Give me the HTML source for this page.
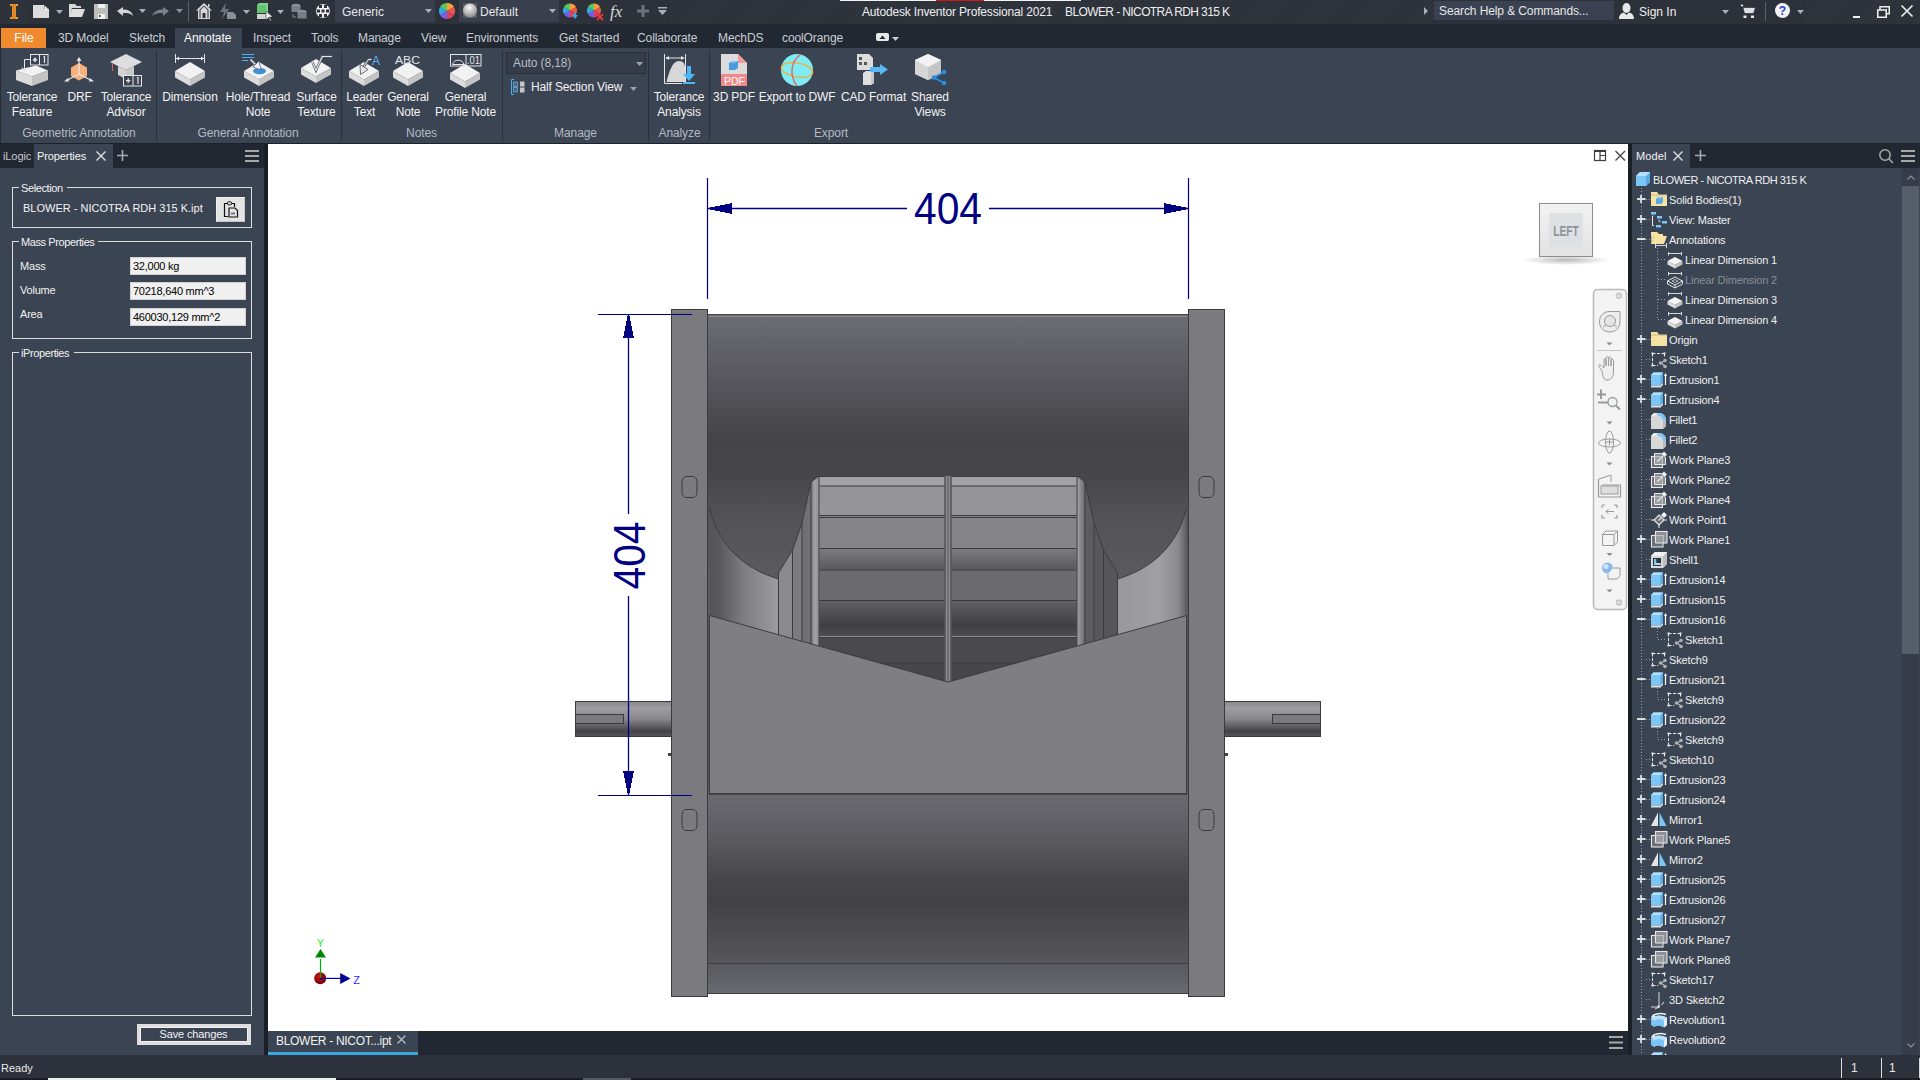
<!DOCTYPE html><html><head><meta charset="utf-8"><title>Autodesk Inventor Professional 2021</title>
<style>
html,body{margin:0;padding:0}
body{width:1920px;height:1080px;position:relative;overflow:hidden;background:#3b4453;font-family:'Liberation Sans', sans-serif}
div,span{box-sizing:border-box}
svg{position:absolute;overflow:visible}
</style></head><body>

<div style="position:absolute;left:0px;top:0px;width:1920px;height:24px;background:#2c313a;"></div>
<div style="position:absolute;left:0px;top:0px;width:28px;height:24px;background:transparent;background-image:repeating-linear-gradient(135deg,rgba(255,255,255,0.03) 0px,rgba(255,255,255,0.03) 1px,transparent 1px,transparent 3.6px);background-attachment:fixed"></div>
<div style="position:absolute;left:670px;top:0px;width:764px;height:24px;background:transparent;background-image:repeating-linear-gradient(135deg,rgba(255,255,255,0.03) 0px,rgba(255,255,255,0.03) 1px,transparent 1px,transparent 3.6px);background-attachment:fixed"></div>
<div style="position:absolute;left:1805px;top:0px;width:115px;height:24px;background:transparent;background-image:repeating-linear-gradient(135deg,rgba(255,255,255,0.03) 0px,rgba(255,255,255,0.03) 1px,transparent 1px,transparent 3.6px);background-attachment:fixed"></div>
<div style="position:absolute;left:840px;top:0px;width:241px;height:1px;background:#f4f4f4;"></div>
<div style="position:absolute;left:936px;top:0px;width:48px;height:1px;background:#d01818;"></div>
<div style="position:absolute;left:0px;top:24px;width:1920px;height:24px;background:#222832;"></div>
<div style="position:absolute;left:0px;top:48px;width:1920px;height:95px;background:#3b4453;"></div>
<div style="position:absolute;left:0px;top:48px;width:1px;height:95px;background:#262b33;"></div>
<div style="position:absolute;left:0px;top:143px;width:1920px;height:1px;background:#1d2128;"></div>
<div style="position:absolute;left:0px;top:144px;width:264px;height:24px;background:#222832;"></div>
<div style="position:absolute;left:0px;top:168px;width:264px;height:887px;background:#3b4453;"></div>
<div style="position:absolute;left:264px;top:144px;width:4px;height:911px;background:#1b1f26;"></div>
<div style="position:absolute;left:1628px;top:144px;width:4px;height:911px;background:#1b1f26;"></div>
<div style="position:absolute;left:268px;top:144px;width:1360px;height:887px;background:#ffffff;"></div>
<div style="position:absolute;left:1632px;top:144px;width:288px;height:24px;background:#222832;"></div>
<div style="position:absolute;left:1632px;top:168px;width:288px;height:887px;background:#3b4453;"></div>
<div style="position:absolute;left:268px;top:1031px;width:1360px;height:24px;background:#222832;"></div>
<div style="position:absolute;left:0px;top:1055px;width:1920px;height:23px;background:#2c313b;"></div>
<div style="position:absolute;left:0px;top:1078px;width:1920px;height:2px;background:#1a1d22;"></div>
<div style="position:absolute;left:48px;top:1078px;width:288px;height:2px;background:#f0f0f0;"></div>
<div style="position:absolute;left:583px;top:1078px;width:48px;height:2px;background:#555a60;"></div>
<svg style="left:10px;top:4px;" width="10" height="15" viewBox="0 0 10 15"><defs><linearGradient id="lg" x1="0" x2="1"><stop offset="0" stop-color="#f7a33a"/><stop offset="0.5" stop-color="#d9801f"/><stop offset="1" stop-color="#f0a540"/></linearGradient></defs><path d="M0 0H8V2H6V13H8V15H0V13H2V2H0Z" fill="url(#lg)"/></svg>
<svg style="left:33px;top:5px;" width="16" height="13" viewBox="0 0 16 13"><path d="M0 0H11L16 4V13H0Z" fill="#dcdcdc"/><path d="M11 0V4H16" fill="#3a4150"/><path d="M11.5 0.5L15.5 4.5H11.5Z" fill="#f4f4f4"/></svg>
<svg style="left:56px;top:10px;" width="7" height="4" viewBox="0 0 7 4"><path d="M0 0H7L3.5 4Z" fill="#a9b0bd"/></svg>
<svg style="left:69px;top:4px;" width="16" height="14" viewBox="0 0 16 14"><path d="M0 0H6L8 2H12V4H3L1 13H0Z" fill="#d8d8d8"/><path d="M3 5H16L13 13H0Z" fill="#dedede"/></svg>
<svg style="left:94px;top:4px;" width="14" height="15" viewBox="0 0 14 15"><rect x="0" y="0" width="14" height="15" fill="#bdbdbd"/><rect x="4" y="0" width="7" height="4" fill="#f2f2f2"/><rect x="4" y="10" width="7" height="5" fill="#f2f2f2"/><rect x="5" y="11" width="1.5" height="2" fill="#333"/></svg>
<svg style="left:117px;top:7px;" width="16" height="10" viewBox="0 0 16 10"><path d="M0 4L6 0V2.5C11 2.5 15 4 16 9C14 6.5 11 6 6 6V9Z" fill="#d4d4d4"/></svg>
<svg style="left:139px;top:9px;" width="7" height="4" viewBox="0 0 7 4"><path d="M0 0H7L3.5 4Z" fill="#a9b0bd"/></svg>
<svg style="left:152px;top:7px;" width="17" height="10" viewBox="0 0 17 10"><path d="M17 4L11 0V2.5C6 2.5 2 4 0 9C3 6.5 6 6 11 6V9Z" fill="#7d818a"/></svg>
<svg style="left:176px;top:9px;" width="7" height="4" viewBox="0 0 7 4"><path d="M0 0H7L3.5 4Z" fill="#8a909b"/></svg>
<div style="position:absolute;left:188px;top:1px;width:1px;height:21px;background:#5b616c;"></div>
<svg style="left:196px;top:3px;" width="16" height="16" viewBox="0 0 16 16"><path d="M8 0L16 7.5H14V16H2V7.5H0Z" fill="#d6d6d6"/><path d="M8 2.5L3.5 6.8V15H12.5V6.8Z" fill="#2c313a"/><path d="M8 3.5L4.5 7V15H11.5V7Z" fill="#d6d6d6"/><rect x="6.5" y="10" width="3" height="5" fill="#2c313a"/><rect x="12" y="1" width="1.5" height="3" fill="#d6d6d6"/></svg>
<svg style="left:220px;top:3px;" width="16" height="16" viewBox="0 0 16 16"><path d="M6 0L0 9H4L2 16L9 6H5Z" fill="#6e737c"/><path d="M7 9H13L16 12V16H7Z" fill="#8b8f97"/></svg>
<svg style="left:243px;top:10px;" width="7" height="4" viewBox="0 0 7 4"><path d="M0 0H7L3.5 4Z" fill="#a9b0bd"/></svg>
<svg style="left:256px;top:3px;" width="17" height="17" viewBox="0 0 17 17"><path d="M3 0H12V10H1V2Z" fill="#7ed28c"/><path d="M1 2H10V10H1Z" fill="#63c473"/><rect x="1" y="11" width="11" height="5" fill="#d4d4d4"/><path d="M10 8L10 17L12.5 14.5L14.5 18L15.5 17.5L13.5 14H17Z" fill="#f0f0f0" stroke="#222" stroke-width="0.5"/></svg>
<svg style="left:277px;top:10px;" width="7" height="4" viewBox="0 0 7 4"><path d="M0 0H7L3.5 4Z" fill="#a9b0bd"/></svg>
<svg style="left:291px;top:3px;" width="16" height="16" viewBox="0 0 16 16"><ellipse cx="5" cy="3" rx="4.5" ry="2.2" fill="#8c9098"/><rect x="0.5" y="3" width="9" height="6" fill="#7a7e86"/><ellipse cx="11" cy="9" rx="4.5" ry="2.2" fill="#8c9098"/><rect x="6.5" y="9" width="9" height="6.5" fill="#7a7e86"/><path d="M2 11V14H5" stroke="#8c9098" fill="none" stroke-width="1"/></svg>
<svg style="left:315px;top:3px;" width="16" height="16" viewBox="0 0 16 16"><circle cx="8" cy="8" r="7.3" fill="#f2f2f2"/><g fill="#2c313a"><rect x="4" y="2" width="3" height="3"/><rect x="9" y="2" width="3" height="3"/><rect x="2" y="6.5" width="3" height="3"/><rect x="6.5" y="6.5" width="3" height="3"/><rect x="11" y="6.5" width="3" height="3"/><rect x="4" y="11" width="3" height="3"/><rect x="9" y="11" width="3" height="3"/></g><circle cx="8" cy="8" r="7.3" fill="none" stroke="#2c313a" stroke-width="0.8"/></svg>
<div style="position:absolute;left:335px;top:0px;width:100px;height:22px;background:#393f4c;"></div>
<div style="position:absolute;left:342px;top:5px;font-size:12px;line-height:14px;color:#e8e8e8;white-space:nowrap;">Generic</div>
<svg style="left:425px;top:9px;" width="7" height="4" viewBox="0 0 7 4"><path d="M0 0H7L3.5 4Z" fill="#a9b0bd"/></svg>
<svg style="left:439px;top:3px;" width="16" height="16" viewBox="0 0 16 16"><g transform="translate(8,8)"><path d="M0 0L0 -8A8 8 0 0 1 6.93 -4Z" fill="#f7a23a"/><path d="M0 0L6.93 -4A8 8 0 0 1 6.93 4Z" fill="#e9574a"/><path d="M0 0L6.93 4A8 8 0 0 1 0 8Z" fill="#d9415c"/><path d="M0 0L0 8A8 8 0 0 1 -6.93 4Z" fill="#7b5ce6"/><path d="M0 0L-6.93 4A8 8 0 0 1 -6.93 -4Z" fill="#32a8e8"/><path d="M0 0L-6.93 -4A8 8 0 0 1 0 -8Z" fill="#5fc25a"/></g></svg>
<div style="position:absolute;left:459px;top:0px;width:100px;height:22px;background:#393f4c;"></div>
<svg style="left:463px;top:3px;" width="14" height="15" viewBox="0 0 14 15"><defs><radialGradient id="mat" cx="0.45" cy="0.3" r="0.7"><stop offset="0" stop-color="#f8f8f8"/><stop offset="1" stop-color="#8a8a8a"/></radialGradient></defs><rect x="0" y="0" width="14" height="15" fill="#5a5a5a"/><circle cx="7" cy="7.5" r="7" fill="url(#mat)"/></svg>
<div style="position:absolute;left:480px;top:5px;font-size:12px;line-height:14px;color:#e8e8e8;white-space:nowrap;">Default</div>
<svg style="left:549px;top:9px;" width="7" height="4" viewBox="0 0 7 4"><path d="M0 0H7L3.5 4Z" fill="#a9b0bd"/></svg>
<svg style="left:563px;top:3px;" width="17" height="17" viewBox="0 0 17 17"><g transform="translate(7,7.5)"><path d="M0 0L0 -7A7 7 0 0 1 6.062 -3.5Z" fill="#f7a23a"/><path d="M0 0L6.062 -3.5A7 7 0 0 1 6.062 3.5Z" fill="#e9574a"/><path d="M0 0L6.062 3.5A7 7 0 0 1 0 7Z" fill="#d9415c"/><path d="M0 0L0 7A7 7 0 0 1 -6.062 3.5Z" fill="#7b5ce6"/><path d="M0 0L-6.062 3.5A7 7 0 0 1 -6.062 -3.5Z" fill="#32a8e8"/><path d="M0 0L-6.062 -3.5A7 7 0 0 1 0 -7Z" fill="#5fc25a"/></g><path d="M9 12H15L12 16Z" fill="#39a7e6"/><rect x="11" y="10" width="2" height="3" fill="#39a7e6"/></svg>
<svg style="left:587px;top:3px;" width="17" height="17" viewBox="0 0 17 17"><g transform="translate(7,7.5)"><path d="M0 0L0 -7A7 7 0 0 1 6.062 -3.5Z" fill="#f7a23a"/><path d="M0 0L6.062 -3.5A7 7 0 0 1 6.062 3.5Z" fill="#e9574a"/><path d="M0 0L6.062 3.5A7 7 0 0 1 0 7Z" fill="#d9415c"/><path d="M0 0L0 7A7 7 0 0 1 -6.062 3.5Z" fill="#7b5ce6"/><path d="M0 0L-6.062 3.5A7 7 0 0 1 -6.062 -3.5Z" fill="#32a8e8"/><path d="M0 0L-6.062 -3.5A7 7 0 0 1 0 -7Z" fill="#5fc25a"/></g><path d="M10 11L16 17M16 11L10 17" stroke="#e8383d" stroke-width="1.8"/></svg>
<div style="position:absolute;left:610px;top:2px;font-size:17px;line-height:20px;color:#d8d8d8;white-space:nowrap;font-family:'Liberation Serif',serif"><i>fx</i></div>
<svg style="left:637px;top:5px;" width="12" height="12" viewBox="0 0 12 12"><path d="M4.5 0H7.5V4.5H12V7.5H7.5V12H4.5V7.5H0V4.5H4.5Z" fill="#6c717a"/></svg>
<svg style="left:658px;top:7px;" width="9" height="8" viewBox="0 0 9 8"><rect x="0" y="0" width="9" height="1.5" fill="#a9b0bd"/><path d="M0 3H9L4.5 8Z" fill="#a9b0bd"/></svg>
<div style="position:absolute;left:862px;top:5px;font-size:12px;line-height:14px;color:#eeeeee;white-space:nowrap;letter-spacing:-0.17px">Autodesk Inventor Professional 2021</div>
<div style="position:absolute;left:1065px;top:5px;font-size:12px;line-height:14px;color:#eeeeee;white-space:nowrap;letter-spacing:-0.6px">BLOWER - NICOTRA RDH 315 K</div>
<svg style="left:1424px;top:7px;" width="4" height="8" viewBox="0 0 4 8"><path d="M0 0L4 4L0 8Z" fill="#a9b0bd"/></svg>
<div style="position:absolute;left:1434px;top:1px;width:180px;height:19px;background:#3a4150;"></div>
<div style="position:absolute;left:1439px;top:4px;font-size:12px;line-height:14px;color:#e6e6e6;white-space:nowrap;letter-spacing:-0.1px">Search Help &amp; Commands...</div>
<svg style="left:1619px;top:3px;" width="15" height="16" viewBox="0 0 15 16"><ellipse cx="7.5" cy="5" rx="4" ry="5" fill="#e8e8e8"/><path d="M0 16C0 11 3 10 5 9.5L7.5 12L10 9.5C12 10 15 11 15 16Z" fill="#e8e8e8"/></svg>
<div style="position:absolute;left:1639px;top:5px;font-size:12px;line-height:14px;color:#eeeeee;white-space:nowrap;">Sign In</div>
<svg style="left:1722px;top:10px;" width="7" height="4" viewBox="0 0 7 4"><path d="M0 0H7L3.5 4Z" fill="#a9b0bd"/></svg>
<svg style="left:1740px;top:4px;" width="16" height="14" viewBox="0 0 16 14"><path d="M0.5 0.5L2.5 1.5L4.5 9.5H13.5L15.5 3.5H3.5Z" fill="#e0e0e0" stroke="#1a2240" stroke-width="0.6"/><path d="M1 1L3 2" stroke="#e8e8e8" stroke-width="1.6"/><rect x="3.5" y="11.5" width="3" height="2.5" fill="#e8e8e8"/><rect x="11" y="11.5" width="3" height="2.5" fill="#e8e8e8"/></svg>
<div style="position:absolute;left:1765px;top:2px;width:1px;height:19px;background:#5b616c;"></div>
<svg style="left:1775px;top:3px;" width="15" height="15" viewBox="0 0 15 15"><circle cx="7.5" cy="7.5" r="7.5" fill="#f2f2f2"/><text x="7.5" y="12" font-family="Liberation Sans" font-weight="bold" font-size="12" text-anchor="middle" fill="#1a3fcf">?</text></svg>
<svg style="left:1797px;top:10px;" width="7" height="4" viewBox="0 0 7 4"><path d="M0 0H7L3.5 4Z" fill="#a9b0bd"/></svg>
<div style="position:absolute;left:1853px;top:16px;width:7px;height:2px;background:#f0f0f0;"></div>
<svg style="left:1877px;top:6px;" width="13" height="12" viewBox="0 0 13 12"><rect x="3" y="0.75" width="9.25" height="7" fill="none" stroke="#f0f0f0" stroke-width="1.5"/><rect x="0.75" y="4" width="8.5" height="7.25" fill="#2c313a" stroke="#f0f0f0" stroke-width="1.5"/></svg>
<svg style="left:1901px;top:5px;" width="12" height="12" viewBox="0 0 12 12"><path d="M0.5 0.5L11.5 11.5M11.5 0.5L0.5 11.5" stroke="#f0f0f0" stroke-width="1.6"/></svg>
<div style="position:absolute;left:1px;top:28px;width:45px;height:20px;background:#f08a2c;"></div>
<div style="position:absolute;left:4.00px;top:31.34px;width:40px;text-align:center;font-size:12px;line-height:15px;color:#ffffff;white-space:nowrap;">File</div>
<div style="position:absolute;left:175px;top:28px;width:67px;height:20px;background:#3b4453;"></div>
<div style="position:absolute;left:58px;top:31.34px;font-size:12px;line-height:15px;color:#c9cdd4;white-space:nowrap;letter-spacing:-0.1px">3D Model</div>
<div style="position:absolute;left:129px;top:31.34px;font-size:12px;line-height:15px;color:#c9cdd4;white-space:nowrap;letter-spacing:-0.1px">Sketch</div>
<div style="position:absolute;left:184px;top:31.34px;font-size:12px;line-height:15px;color:#ffffff;white-space:nowrap;letter-spacing:-0.1px">Annotate</div>
<div style="position:absolute;left:253px;top:31.34px;font-size:12px;line-height:15px;color:#c9cdd4;white-space:nowrap;letter-spacing:-0.1px">Inspect</div>
<div style="position:absolute;left:311px;top:31.34px;font-size:12px;line-height:15px;color:#c9cdd4;white-space:nowrap;letter-spacing:-0.1px">Tools</div>
<div style="position:absolute;left:358px;top:31.34px;font-size:12px;line-height:15px;color:#c9cdd4;white-space:nowrap;letter-spacing:-0.1px">Manage</div>
<div style="position:absolute;left:421px;top:31.34px;font-size:12px;line-height:15px;color:#c9cdd4;white-space:nowrap;letter-spacing:-0.1px">View</div>
<div style="position:absolute;left:466px;top:31.34px;font-size:12px;line-height:15px;color:#c9cdd4;white-space:nowrap;letter-spacing:-0.1px">Environments</div>
<div style="position:absolute;left:559px;top:31.34px;font-size:12px;line-height:15px;color:#c9cdd4;white-space:nowrap;letter-spacing:-0.1px">Get Started</div>
<div style="position:absolute;left:637px;top:31.34px;font-size:12px;line-height:15px;color:#c9cdd4;white-space:nowrap;letter-spacing:-0.1px">Collaborate</div>
<div style="position:absolute;left:718px;top:31.34px;font-size:12px;line-height:15px;color:#c9cdd4;white-space:nowrap;letter-spacing:-0.1px">MechDS</div>
<div style="position:absolute;left:782px;top:31.34px;font-size:12px;line-height:15px;color:#c9cdd4;white-space:nowrap;letter-spacing:-0.1px">coolOrange</div>
<svg style="left:876px;top:33px;" width="14" height="8" viewBox="0 0 14 8"><rect x="0" y="0" width="13" height="8" rx="2" fill="#e8e8e8"/><path d="M3.5 6L6.5 2.5L9.5 6Z" fill="#222832"/></svg>
<svg style="left:892px;top:37px;" width="7" height="4" viewBox="0 0 7 4"><path d="M0 0H7L3.5 4Z" fill="#c9cdd4"/></svg>
<svg style="left:0;top:0" width="1920" height="150" viewBox="0 0 1920 150"><polygon points="16,70.5 36,65.5 48,70.5 32,76.5" fill="#f2f2f2"/><polygon points="16,70.5 32,76.5 32,86 16,80" fill="#dcdcdc"/><polygon points="32,76.5 48,70.5 48,80 32,86" fill="#c4c4c4"/><rect x="30.5" y="54.5" width="17.5" height="10.5" fill="none" stroke="#e6e6e6" stroke-width="1"/><line x1="39.5" y1="54.5" x2="39.5" y2="65" stroke="#e6e6e6"/><path d="M35 57.5V62M32.8 59.8H37.2" stroke="#e6e6e6" stroke-width="1.2"/><circle cx="35" cy="59.8" r="1.3" fill="none" stroke="#e6e6e6" stroke-width="0.8"/><path d="M43.5 57L44.5 56.5V63" stroke="#e6e6e6" stroke-width="1.2" fill="none"/><path d="M30.5 59.5H24.5V69" stroke="#e6e6e6" fill="none"/><path d="M22 67.5L24.5 71.5L27 67.5" stroke="#e6e6e6" fill="none"/><polygon points="79,63 87,67.5 87,76 79,80.5 71,76 71,67.5" fill="#f6b27c"/><path d="M79 58V74M79 74L66.5 80.5M79 74L91.5 80.5" stroke="#e6e6e6" stroke-width="1.2"/><path d="M76.5 61L79 57L81.5 61Z" fill="#e6e6e6"/><path d="M64 81.5L68 78L69 81.5Z" fill="#e6e6e6"/><path d="M94 81.5L90 78L89 81.5Z" fill="#e6e6e6"/><polygon points="126,54 142,62 126,70 110,62" fill="#dedede"/><polygon points="118,66 118,75 126,79 126,70" fill="#d4d4d4"/><polygon points="126,70 134,66 134,75 126,79" fill="#c8c8c8"/><rect x="112" y="64" width="1" height="7" fill="#e06060"/><rect x="123.5" y="75.5" width="18" height="10.5" fill="#3b4453" stroke="#e6e6e6" stroke-width="1"/><line x1="133" y1="75.5" x2="133" y2="86" stroke="#e6e6e6"/><path d="M128.2 78.3V83M126 80.6H130.4" stroke="#e6e6e6" stroke-width="1.2"/><path d="M137 78L138 77.5V84" stroke="#e6e6e6" stroke-width="1.2" fill="none"/><polygon points="190.0,62.0 205.0,71.0 190.0,79.5 175.0,71.0" fill="#f2f2f2"/><polygon points="175.0,71.0 190.0,79.5 190.0,86.0 175.0,77.5" fill="#dcdcdc"/><polygon points="190.0,79.5 205.0,71.0 205.0,77.5 190.0,86.0" fill="#c4c4c4"/><path d="M175.5 54V63M204.5 54V63M175.5 58.5H204.5" stroke="#e6e6e6" stroke-width="1"/><path d="M176 58.5L179 56.5V60.5Z M204 58.5L201 56.5V60.5Z" fill="#e6e6e6"/><polygon points="259.0,62.0 274.0,71.0 259.0,79.5 244.0,71.0" fill="#f2f2f2"/><polygon points="244.0,71.0 259.0,79.5 259.0,86.0 244.0,77.5" fill="#dcdcdc"/><polygon points="259.0,79.5 274.0,71.0 274.0,77.5 259.0,86.0" fill="#c4c4c4"/><ellipse cx="259.5" cy="71" rx="6.5" ry="3.3" fill="#3d8fd8"/><path d="M242 54.5H254M242 57.5H254M242 60.5H248" stroke="#4fb0f0" stroke-width="1.1"/><path d="M250.5 59.5L256 65" stroke="#5a5e66" stroke-width="2.8"/><path d="M250.5 59.5L256 65" stroke="#f4f4f4" stroke-width="1.2"/><polygon points="261,70 253,67 259,61" fill="#f4f4f4" stroke="#5a5e66" stroke-width="0.8"/><polygon points="316.0,59.0 331.0,68.0 316.0,76.5 301.0,68.0" fill="#f2f2f2"/><polygon points="301.0,68.0 316.0,76.5 316.0,83.0 301.0,74.5" fill="#dcdcdc"/><polygon points="316.0,76.5 331.0,68.0 331.0,74.5 316.0,83.0" fill="#c4c4c4"/><path d="M312.5 62L316 70.5L322.5 56" stroke="#6a6e75" stroke-width="2.6" fill="none"/><path d="M312.5 62L316 70.5L322.5 56" stroke="#f2f2f2" stroke-width="1" fill="none"/><path d="M322 56.5H332" stroke="#e6e6e6" stroke-width="1.2"/><polygon points="364.0,62.0 379.0,71.0 364.0,79.5 349.0,71.0" fill="#f2f2f2"/><polygon points="349.0,71.0 364.0,79.5 364.0,86.0 349.0,77.5" fill="#dcdcdc"/><polygon points="364.0,79.5 379.0,71.0 379.0,77.5 364.0,86.0" fill="#c4c4c4"/><path d="M371.5 59.5H368.5L363.5 67" stroke="#5a5e66" fill="none" stroke-width="2.6"/><path d="M371.5 59.5H368.5L363.5 67" stroke="#f0f0f0" fill="none" stroke-width="1"/><polygon points="360.5,74.5 360,64.5 368,69.5" fill="#e8e8e8" stroke="#5a5e66" stroke-width="0.9"/><text x="372" y="64.5" font-family="Liberation Sans" font-size="12" fill="#5bb4f4">A</text><polygon points="408.0,62.0 423.0,71.0 408.0,79.5 393.0,71.0" fill="#f2f2f2"/><polygon points="393.0,71.0 408.0,79.5 408.0,86.0 393.0,77.5" fill="#dcdcdc"/><polygon points="408.0,79.5 423.0,71.0 423.0,77.5 408.0,86.0" fill="#c4c4c4"/><text x="395" y="64" font-family="Liberation Sans" font-size="11.5" fill="#e6e6e6" textLength="25" lengthAdjust="spacingAndGlyphs">ABC</text><polygon points="465.0,64.0 480.0,73.0 465.0,81.5 450.0,73.0" fill="#f2f2f2"/><polygon points="450.0,73.0 465.0,81.5 465.0,88.0 450.0,79.5" fill="#dcdcdc"/><polygon points="465.0,81.5 480.0,73.0 480.0,79.5 465.0,88.0" fill="#c4c4c4"/><rect x="450.5" y="54.5" width="30.5" height="11.5" fill="none" stroke="#e6e6e6" stroke-width="1"/><line x1="466" y1="54.5" x2="466" y2="66" stroke="#e6e6e6"/><path d="M452.5 64.5A6 6 0 0 1 464 64.5Z" fill="none" stroke="#e6e6e6"/><text x="467" y="64" font-family="Liberation Sans" font-size="10" fill="#e6e6e6" textLength="13" lengthAdjust="spacingAndGlyphs">.01</text><path d="M664.5 54V83.5H682M685.5 54V82.5" stroke="#e6e6e6" stroke-width="1" fill="none"/><path d="M666 58H684" stroke="#e6e6e6" stroke-width="1"/><path d="M665.5 58L669 56V60Z M684.5 58L681 56V60Z" fill="#e6e6e6"/><path d="M666.5 82C669 73 672 61 679 61C683.5 61 685 64 685 68V82Z" fill="#d8d8d8"/><path d="M687 66H691V74H695L689 81L683 74H687Z" fill="#4fb7f5"/><rect x="683" y="82" width="12" height="2" fill="#4fb7f5"/><path d="M721 54H738L747 63V86H721Z" fill="#dcdcdc"/><path d="M738 54L747 63H738Z" fill="#f49a9a"/><rect x="721" y="74" width="26" height="12" fill="#f08a8a"/><text x="724" y="84.5" font-family="Liberation Sans" font-size="10" fill="#ffffff" textLength="21" lengthAdjust="spacingAndGlyphs">PDF</text><polygon points="729,63 732,61 738,61 738,68 735,70 729,70" fill="#4a9be0"/><polygon points="729,63 732,61 738,61 735,63" fill="#7dc0f5"/><circle cx="797" cy="70" r="16" fill="#7eecf2"/><ellipse cx="797" cy="70" rx="15.8" ry="7" fill="none" stroke="#f0b040" stroke-width="1.4" transform="rotate(10 797 70)"/><path d="M801 54.3C792 60 788 74 797 85.8" stroke="#e85c5c" stroke-width="1.3" fill="none"/><path d="M857 54H869L873 58V70H857Z" fill="#dcdcdc"/><g fill="#555"><rect x="859" y="57" width="3" height="3"/><rect x="859" y="62" width="3" height="3"/><rect x="864" y="62" width="3" height="3"/></g><polygon points="863,73 866,71 874,71 874,83 871,85 863,85" fill="#e0e0e0"/><polygon points="871,73 874,71 874,83 871,85" fill="#c6c6c6"/><path d="M870 67H880V64L888 69.5L880 75V72H870Z" fill="#5ab8f5"/><polygon points="928,54 941,60 941,74 928,80 915,74 915,60" fill="#e4e4e4"/><polygon points="928,67 941,60 941,74 928,80" fill="#c4c4c4"/><polygon points="915,60 928,67 928,80 915,74" fill="#d6d6d6"/><polygon points="928,54 941,60 928,67 915,60" fill="#f2f2f2"/><path d="M944 72L934 77.5L944 83" stroke="#2b8fe0" stroke-width="1.8" fill="none"/><circle cx="944" cy="72" r="2.3" fill="#2b8fe0"/><circle cx="934" cy="77.5" r="2.3" fill="#2b8fe0"/><circle cx="944" cy="83" r="2.3" fill="#2b8fe0"/></svg>
<div style="position:absolute;left:156px;top:50px;width:1px;height:91px;background:#2a3039;"></div>
<div style="position:absolute;left:341px;top:50px;width:1px;height:91px;background:#2a3039;"></div>
<div style="position:absolute;left:502px;top:50px;width:1px;height:91px;background:#2a3039;"></div>
<div style="position:absolute;left:648px;top:50px;width:1px;height:91px;background:#2a3039;"></div>
<div style="position:absolute;left:709px;top:50px;width:1px;height:91px;background:#2a3039;"></div>
<div style="position:absolute;left:-28.00px;top:90.34px;width:120px;text-align:center;font-size:12px;line-height:15px;color:#f2f2f2;white-space:nowrap;letter-spacing:-0.15px">Tolerance</div>
<div style="position:absolute;left:-28.00px;top:105.34px;width:120px;text-align:center;font-size:12px;line-height:15px;color:#f2f2f2;white-space:nowrap;letter-spacing:-0.15px">Feature</div>
<div style="position:absolute;left:19.50px;top:90.34px;width:120px;text-align:center;font-size:12px;line-height:15px;color:#f2f2f2;white-space:nowrap;letter-spacing:-0.15px">DRF</div>
<div style="position:absolute;left:66.00px;top:90.34px;width:120px;text-align:center;font-size:12px;line-height:15px;color:#f2f2f2;white-space:nowrap;letter-spacing:-0.15px">Tolerance</div>
<div style="position:absolute;left:66.00px;top:105.34px;width:120px;text-align:center;font-size:12px;line-height:15px;color:#f2f2f2;white-space:nowrap;letter-spacing:-0.15px">Advisor</div>
<div style="position:absolute;left:130.00px;top:90.34px;width:120px;text-align:center;font-size:12px;line-height:15px;color:#f2f2f2;white-space:nowrap;letter-spacing:-0.15px">Dimension</div>
<div style="position:absolute;left:198.00px;top:90.34px;width:120px;text-align:center;font-size:12px;line-height:15px;color:#f2f2f2;white-space:nowrap;letter-spacing:-0.15px">Hole/Thread</div>
<div style="position:absolute;left:198.00px;top:105.34px;width:120px;text-align:center;font-size:12px;line-height:15px;color:#f2f2f2;white-space:nowrap;letter-spacing:-0.15px">Note</div>
<div style="position:absolute;left:256.50px;top:90.34px;width:120px;text-align:center;font-size:12px;line-height:15px;color:#f2f2f2;white-space:nowrap;letter-spacing:-0.15px">Surface</div>
<div style="position:absolute;left:256.50px;top:105.34px;width:120px;text-align:center;font-size:12px;line-height:15px;color:#f2f2f2;white-space:nowrap;letter-spacing:-0.15px">Texture</div>
<div style="position:absolute;left:304.50px;top:90.34px;width:120px;text-align:center;font-size:12px;line-height:15px;color:#f2f2f2;white-space:nowrap;letter-spacing:-0.15px">Leader</div>
<div style="position:absolute;left:304.50px;top:105.34px;width:120px;text-align:center;font-size:12px;line-height:15px;color:#f2f2f2;white-space:nowrap;letter-spacing:-0.15px">Text</div>
<div style="position:absolute;left:348.00px;top:90.34px;width:120px;text-align:center;font-size:12px;line-height:15px;color:#f2f2f2;white-space:nowrap;letter-spacing:-0.15px">General</div>
<div style="position:absolute;left:348.00px;top:105.34px;width:120px;text-align:center;font-size:12px;line-height:15px;color:#f2f2f2;white-space:nowrap;letter-spacing:-0.15px">Note</div>
<div style="position:absolute;left:405.50px;top:90.34px;width:120px;text-align:center;font-size:12px;line-height:15px;color:#f2f2f2;white-space:nowrap;letter-spacing:-0.15px">General</div>
<div style="position:absolute;left:405.50px;top:105.34px;width:120px;text-align:center;font-size:12px;line-height:15px;color:#f2f2f2;white-space:nowrap;letter-spacing:-0.15px">Profile Note</div>
<div style="position:absolute;left:619.00px;top:90.34px;width:120px;text-align:center;font-size:12px;line-height:15px;color:#f2f2f2;white-space:nowrap;letter-spacing:-0.15px">Tolerance</div>
<div style="position:absolute;left:619.00px;top:105.34px;width:120px;text-align:center;font-size:12px;line-height:15px;color:#f2f2f2;white-space:nowrap;letter-spacing:-0.15px">Analysis</div>
<div style="position:absolute;left:674.00px;top:90.34px;width:120px;text-align:center;font-size:12px;line-height:15px;color:#f2f2f2;white-space:nowrap;letter-spacing:-0.15px">3D PDF</div>
<div style="position:absolute;left:737.00px;top:90.34px;width:120px;text-align:center;font-size:12px;line-height:15px;color:#f2f2f2;white-space:nowrap;letter-spacing:-0.15px">Export to DWF</div>
<div style="position:absolute;left:813.50px;top:90.34px;width:120px;text-align:center;font-size:12px;line-height:15px;color:#f2f2f2;white-space:nowrap;letter-spacing:-0.15px">CAD Format</div>
<div style="position:absolute;left:870.00px;top:90.34px;width:120px;text-align:center;font-size:12px;line-height:15px;color:#f2f2f2;white-space:nowrap;letter-spacing:-0.15px">Shared</div>
<div style="position:absolute;left:870.00px;top:105.34px;width:120px;text-align:center;font-size:12px;line-height:15px;color:#f2f2f2;white-space:nowrap;letter-spacing:-0.15px">Views</div>
<div style="position:absolute;left:-21.00px;top:126.34px;width:200px;text-align:center;font-size:12px;line-height:15px;color:#b4b9c2;white-space:nowrap;letter-spacing:-0.1px">Geometric Annotation</div>
<div style="position:absolute;left:148.00px;top:126.34px;width:200px;text-align:center;font-size:12px;line-height:15px;color:#b4b9c2;white-space:nowrap;letter-spacing:-0.1px">General Annotation</div>
<div style="position:absolute;left:321.50px;top:126.34px;width:200px;text-align:center;font-size:12px;line-height:15px;color:#b4b9c2;white-space:nowrap;letter-spacing:-0.1px">Notes</div>
<div style="position:absolute;left:475.50px;top:126.34px;width:200px;text-align:center;font-size:12px;line-height:15px;color:#b4b9c2;white-space:nowrap;letter-spacing:-0.1px">Manage</div>
<div style="position:absolute;left:579.50px;top:126.34px;width:200px;text-align:center;font-size:12px;line-height:15px;color:#b4b9c2;white-space:nowrap;letter-spacing:-0.1px">Analyze</div>
<div style="position:absolute;left:731.00px;top:126.34px;width:200px;text-align:center;font-size:12px;line-height:15px;color:#b4b9c2;white-space:nowrap;letter-spacing:-0.1px">Export</div>
<div style="position:absolute;left:506px;top:52px;width:140px;height:22px;background:#363d4a;border:1px solid #2a2f38"></div>
<div style="position:absolute;left:513px;top:56.34px;font-size:12px;line-height:15px;color:#b8bcc4;white-space:nowrap;letter-spacing:-0.1px">Auto (8,18)</div>
<svg style="left:636px;top:62px;" width="7" height="4" viewBox="0 0 7 4"><path d="M0 0H7L3.5 4Z" fill="#9aa1ad"/></svg>
<svg style="left:511px;top:79px;" width="14" height="16" viewBox="0 0 14 16"><path d="M3 0.5H0.5V15.5H3" stroke="#4fb0f0" fill="none"/><rect x="2.5" y="3" width="4" height="4.5" fill="#5a6270" stroke="#4fb0f0" stroke-width="0.8"/><rect x="2.5" y="8.5" width="4" height="4.5" fill="#5a6270" stroke="#4fb0f0" stroke-width="0.8"/><rect x="9" y="2.5" width="4.5" height="5" fill="#c6c6c6"/><rect x="9" y="8.5" width="4.5" height="5" fill="#c6c6c6"/></svg>
<div style="position:absolute;left:531px;top:80.34px;font-size:12px;line-height:15px;color:#f2f2f2;white-space:nowrap;letter-spacing:-0.15px">Half Section View</div>
<svg style="left:630px;top:87px;" width="7" height="4" viewBox="0 0 7 4"><path d="M0 0H7L3.5 4Z" fill="#9aa1ad"/></svg>
<div style="position:absolute;left:3px;top:149.19px;font-size:11px;line-height:14px;color:#c6cad1;white-space:nowrap;letter-spacing:-0.1px">iLogic</div>
<div style="position:absolute;left:34px;top:144px;width:79px;height:24px;background:#3b4453;"></div>
<div style="position:absolute;left:37px;top:149.19px;font-size:11px;line-height:14px;color:#f4f4f4;white-space:nowrap;letter-spacing:-0.1px">Properties</div>
<svg style="left:96px;top:151px;" width="10" height="10" viewBox="0 0 10 10"><path d="M0.5 0.5L9.5 9.5M9.5 0.5L0.5 9.5" stroke="#e0e0e0" stroke-width="1.4"/></svg>
<svg style="left:117px;top:150px;" width="11" height="11" viewBox="0 0 11 11"><path d="M5.5 0V11M0 5.5H11" stroke="#a6a9ae" stroke-width="1.6"/></svg>
<svg style="left:245px;top:150px;" width="14" height="12" viewBox="0 0 14 12"><rect x="0" y="0" width="14" height="2" fill="#a8a8a8"/><rect x="0" y="5" width="14" height="2" fill="#a8a8a8"/><rect x="0" y="10" width="14" height="2" fill="#a8a8a8"/></svg>
<div style="position:absolute;left:12px;top:187px;width:1px;height:41px;background:#dcdcdc;"></div>
<div style="position:absolute;left:251px;top:187px;width:1px;height:41px;background:#dcdcdc;"></div>
<div style="position:absolute;left:12px;top:227px;width:240px;height:1px;background:#dcdcdc;"></div>
<div style="position:absolute;left:12px;top:187px;width:7px;height:1px;background:#dcdcdc;"></div>
<div style="position:absolute;left:67px;top:187px;width:184px;height:1px;background:#dcdcdc;"></div>
<div style="position:absolute;left:21px;top:181.19px;font-size:11px;line-height:14px;color:#f2f2f2;white-space:nowrap;letter-spacing:-0.4px">Selection</div>
<div style="position:absolute;left:23px;top:201.19px;font-size:11px;line-height:14px;color:#f4f4f4;white-space:nowrap;">BLOWER - NICOTRA RDH 315 K.ipt</div>
<div style="position:absolute;left:216px;top:197px;width:29px;height:25px;background:#e3e3e3;border:1px solid #f0f0f0;border-right-color:#c8c8c8;border-bottom-color:#c8c8c8"></div>
<svg style="left:222px;top:201px;" width="17" height="17" viewBox="0 0 17 17"><path d="M2.5 2.5H5.5M9.5 2.5H12.5V6" stroke="#111" stroke-width="1.2" fill="none"/><path d="M2.5 2V15.5H6" stroke="#111" stroke-width="1.2" fill="none"/><rect x="5.5" y="0.8" width="4" height="3" rx="1" fill="none" stroke="#111" stroke-width="1"/><path d="M7 7H13L15.5 9.5V16H7Z" fill="#e3e3e3" stroke="#111" stroke-width="1.2"/><rect x="9" y="11.5" width="4" height="2" fill="#777"/></svg>
<div style="position:absolute;left:12px;top:241px;width:1px;height:98px;background:#dcdcdc;"></div>
<div style="position:absolute;left:251px;top:241px;width:1px;height:98px;background:#dcdcdc;"></div>
<div style="position:absolute;left:12px;top:338px;width:240px;height:1px;background:#dcdcdc;"></div>
<div style="position:absolute;left:12px;top:241px;width:7px;height:1px;background:#dcdcdc;"></div>
<div style="position:absolute;left:98px;top:241px;width:153px;height:1px;background:#dcdcdc;"></div>
<div style="position:absolute;left:21px;top:235.19px;font-size:11px;line-height:14px;color:#f2f2f2;white-space:nowrap;letter-spacing:-0.4px">Mass Properties</div>
<div style="position:absolute;left:20px;top:259.19px;font-size:11px;line-height:14px;color:#f0f0f0;white-space:nowrap;letter-spacing:-0.2px">Mass</div>
<div style="position:absolute;left:130px;top:257px;width:116px;height:18px;background:#f0f0f0;border:1px solid #d2d2d2"></div>
<div style="position:absolute;left:133px;top:259.19px;font-size:11px;line-height:14px;color:#000000;white-space:nowrap;letter-spacing:-0.25px">32,000 kg</div>
<div style="position:absolute;left:20px;top:283.19px;font-size:11px;line-height:14px;color:#f0f0f0;white-space:nowrap;letter-spacing:-0.2px">Volume</div>
<div style="position:absolute;left:130px;top:282px;width:116px;height:18px;background:#f0f0f0;border:1px solid #d2d2d2"></div>
<div style="position:absolute;left:133px;top:284.19px;font-size:11px;line-height:14px;color:#000000;white-space:nowrap;letter-spacing:-0.25px">70218,640 mm^3</div>
<div style="position:absolute;left:20px;top:307.19px;font-size:11px;line-height:14px;color:#f0f0f0;white-space:nowrap;letter-spacing:-0.2px">Area</div>
<div style="position:absolute;left:130px;top:308px;width:116px;height:18px;background:#f0f0f0;border:1px solid #d2d2d2"></div>
<div style="position:absolute;left:133px;top:310.19px;font-size:11px;line-height:14px;color:#000000;white-space:nowrap;letter-spacing:-0.25px">460030,129 mm^2</div>
<div style="position:absolute;left:12px;top:352px;width:1px;height:664px;background:#dcdcdc;"></div>
<div style="position:absolute;left:251px;top:352px;width:1px;height:664px;background:#dcdcdc;"></div>
<div style="position:absolute;left:12px;top:1015px;width:240px;height:1px;background:#dcdcdc;"></div>
<div style="position:absolute;left:12px;top:352px;width:7px;height:1px;background:#dcdcdc;"></div>
<div style="position:absolute;left:74px;top:352px;width:177px;height:1px;background:#dcdcdc;"></div>
<div style="position:absolute;left:21px;top:346.19px;font-size:11px;line-height:14px;color:#f2f2f2;white-space:nowrap;letter-spacing:-0.4px">iProperties</div>
<div style="position:absolute;left:137px;top:1024px;width:114px;height:21px;background:#3b4453;border:3px solid #dedede;box-shadow:inset 0 0 0 1px #f2f2f2"></div>
<div style="position:absolute;left:138.50px;top:1027.19px;width:110px;text-align:center;font-size:11px;line-height:14px;color:#f2f2f2;white-space:nowrap;letter-spacing:-0.15px">Save changes</div>
<div style="position:absolute;left:1px;top:1061.19px;font-size:11px;line-height:14px;color:#e8e8e8;white-space:nowrap;letter-spacing:0px">Ready</div>
<div style="position:absolute;left:1632px;top:144px;width:58px;height:24px;background:#3b4453;"></div>
<div style="position:absolute;left:1636px;top:149.19px;font-size:11px;line-height:14px;color:#f4f4f4;white-space:nowrap;letter-spacing:0.1px">Model</div>
<svg style="left:1673px;top:151px;" width="10" height="10" viewBox="0 0 10 10"><path d="M0.5 0.5L9.5 9.5M9.5 0.5L0.5 9.5" stroke="#e0e0e0" stroke-width="1.4"/></svg>
<svg style="left:1695px;top:150px;" width="11" height="11" viewBox="0 0 11 11"><path d="M5.5 0V11M0 5.5H11" stroke="#a6a9ae" stroke-width="1.6"/></svg>
<svg style="left:1879px;top:149px;" width="15" height="15" viewBox="0 0 15 15"><circle cx="6" cy="6" r="5.2" fill="none" stroke="#a8a8a8" stroke-width="1.5"/><path d="M9.8 9.8L14 14" stroke="#a8a8a8" stroke-width="1.6"/></svg>
<svg style="left:1901px;top:150px;" width="14" height="12" viewBox="0 0 14 12"><rect x="0" y="0" width="14" height="2" fill="#a8a8a8"/><rect x="0" y="5" width="14" height="2" fill="#a8a8a8"/><rect x="0" y="10" width="14" height="2" fill="#a8a8a8"/></svg>
<div style="position:absolute;left:1902px;top:168px;width:17px;height:887px;background:#363c49;"></div>
<div style="position:absolute;left:1902px;top:186px;width:17px;height:468px;background:#565e6c;"></div>
<svg style="left:1907px;top:175px;" width="8" height="5" viewBox="0 0 8 5"><path d="M0.5 4.5L4 1L7.5 4.5" stroke="#8a92a0" stroke-width="1.2" fill="none"/></svg>
<svg style="left:1907px;top:1043px;" width="8" height="5" viewBox="0 0 8 5"><path d="M0.5 0.5L4 4L7.5 0.5" stroke="#8a92a0" stroke-width="1.2" fill="none"/></svg>
<div style="position:absolute;left:1653px;top:173.19px;font-size:11px;line-height:14px;color:#f0f0f0;white-space:nowrap;letter-spacing:-0.45px">BLOWER - NICOTRA RDH 315 K</div>
<div style="position:absolute;left:1669px;top:193.19px;font-size:11px;line-height:14px;color:#f0f0f0;white-space:nowrap;letter-spacing:-0.15px">Solid Bodies(1)</div>
<div style="position:absolute;left:1669px;top:213.19px;font-size:11px;line-height:14px;color:#f0f0f0;white-space:nowrap;letter-spacing:-0.15px">View: Master</div>
<div style="position:absolute;left:1669px;top:233.19px;font-size:11px;line-height:14px;color:#f0f0f0;white-space:nowrap;letter-spacing:-0.15px">Annotations</div>
<div style="position:absolute;left:1685px;top:253.19px;font-size:11px;line-height:14px;color:#f0f0f0;white-space:nowrap;letter-spacing:-0.15px">Linear Dimension 1</div>
<div style="position:absolute;left:1685px;top:273.19px;font-size:11px;line-height:14px;color:#8a8f98;white-space:nowrap;letter-spacing:-0.15px">Linear Dimension 2</div>
<div style="position:absolute;left:1685px;top:293.19px;font-size:11px;line-height:14px;color:#f0f0f0;white-space:nowrap;letter-spacing:-0.15px">Linear Dimension 3</div>
<div style="position:absolute;left:1685px;top:313.19px;font-size:11px;line-height:14px;color:#f0f0f0;white-space:nowrap;letter-spacing:-0.15px">Linear Dimension 4</div>
<div style="position:absolute;left:1669px;top:333.19px;font-size:11px;line-height:14px;color:#f0f0f0;white-space:nowrap;letter-spacing:-0.15px">Origin</div>
<div style="position:absolute;left:1669px;top:353.19px;font-size:11px;line-height:14px;color:#f0f0f0;white-space:nowrap;letter-spacing:-0.15px">Sketch1</div>
<div style="position:absolute;left:1669px;top:373.19px;font-size:11px;line-height:14px;color:#f0f0f0;white-space:nowrap;letter-spacing:-0.15px">Extrusion1</div>
<div style="position:absolute;left:1669px;top:393.19px;font-size:11px;line-height:14px;color:#f0f0f0;white-space:nowrap;letter-spacing:-0.15px">Extrusion4</div>
<div style="position:absolute;left:1669px;top:413.19px;font-size:11px;line-height:14px;color:#f0f0f0;white-space:nowrap;letter-spacing:-0.15px">Fillet1</div>
<div style="position:absolute;left:1669px;top:433.19px;font-size:11px;line-height:14px;color:#f0f0f0;white-space:nowrap;letter-spacing:-0.15px">Fillet2</div>
<div style="position:absolute;left:1669px;top:453.19px;font-size:11px;line-height:14px;color:#f0f0f0;white-space:nowrap;letter-spacing:-0.15px">Work Plane3</div>
<div style="position:absolute;left:1669px;top:473.19px;font-size:11px;line-height:14px;color:#f0f0f0;white-space:nowrap;letter-spacing:-0.15px">Work Plane2</div>
<div style="position:absolute;left:1669px;top:493.19px;font-size:11px;line-height:14px;color:#f0f0f0;white-space:nowrap;letter-spacing:-0.15px">Work Plane4</div>
<div style="position:absolute;left:1669px;top:513.19px;font-size:11px;line-height:14px;color:#f0f0f0;white-space:nowrap;letter-spacing:-0.15px">Work Point1</div>
<div style="position:absolute;left:1669px;top:533.19px;font-size:11px;line-height:14px;color:#f0f0f0;white-space:nowrap;letter-spacing:-0.15px">Work Plane1</div>
<div style="position:absolute;left:1669px;top:553.19px;font-size:11px;line-height:14px;color:#f0f0f0;white-space:nowrap;letter-spacing:-0.15px">Shell1</div>
<div style="position:absolute;left:1669px;top:573.19px;font-size:11px;line-height:14px;color:#f0f0f0;white-space:nowrap;letter-spacing:-0.15px">Extrusion14</div>
<div style="position:absolute;left:1669px;top:593.19px;font-size:11px;line-height:14px;color:#f0f0f0;white-space:nowrap;letter-spacing:-0.15px">Extrusion15</div>
<div style="position:absolute;left:1669px;top:613.19px;font-size:11px;line-height:14px;color:#f0f0f0;white-space:nowrap;letter-spacing:-0.15px">Extrusion16</div>
<div style="position:absolute;left:1685px;top:633.19px;font-size:11px;line-height:14px;color:#f0f0f0;white-space:nowrap;letter-spacing:-0.15px">Sketch1</div>
<div style="position:absolute;left:1669px;top:653.19px;font-size:11px;line-height:14px;color:#f0f0f0;white-space:nowrap;letter-spacing:-0.15px">Sketch9</div>
<div style="position:absolute;left:1669px;top:673.19px;font-size:11px;line-height:14px;color:#f0f0f0;white-space:nowrap;letter-spacing:-0.15px">Extrusion21</div>
<div style="position:absolute;left:1685px;top:693.19px;font-size:11px;line-height:14px;color:#f0f0f0;white-space:nowrap;letter-spacing:-0.15px">Sketch9</div>
<div style="position:absolute;left:1669px;top:713.19px;font-size:11px;line-height:14px;color:#f0f0f0;white-space:nowrap;letter-spacing:-0.15px">Extrusion22</div>
<div style="position:absolute;left:1685px;top:733.19px;font-size:11px;line-height:14px;color:#f0f0f0;white-space:nowrap;letter-spacing:-0.15px">Sketch9</div>
<div style="position:absolute;left:1669px;top:753.19px;font-size:11px;line-height:14px;color:#f0f0f0;white-space:nowrap;letter-spacing:-0.15px">Sketch10</div>
<div style="position:absolute;left:1669px;top:773.19px;font-size:11px;line-height:14px;color:#f0f0f0;white-space:nowrap;letter-spacing:-0.15px">Extrusion23</div>
<div style="position:absolute;left:1669px;top:793.19px;font-size:11px;line-height:14px;color:#f0f0f0;white-space:nowrap;letter-spacing:-0.15px">Extrusion24</div>
<div style="position:absolute;left:1669px;top:813.19px;font-size:11px;line-height:14px;color:#f0f0f0;white-space:nowrap;letter-spacing:-0.15px">Mirror1</div>
<div style="position:absolute;left:1669px;top:833.19px;font-size:11px;line-height:14px;color:#f0f0f0;white-space:nowrap;letter-spacing:-0.15px">Work Plane5</div>
<div style="position:absolute;left:1669px;top:853.19px;font-size:11px;line-height:14px;color:#f0f0f0;white-space:nowrap;letter-spacing:-0.15px">Mirror2</div>
<div style="position:absolute;left:1669px;top:873.19px;font-size:11px;line-height:14px;color:#f0f0f0;white-space:nowrap;letter-spacing:-0.15px">Extrusion25</div>
<div style="position:absolute;left:1669px;top:893.19px;font-size:11px;line-height:14px;color:#f0f0f0;white-space:nowrap;letter-spacing:-0.15px">Extrusion26</div>
<div style="position:absolute;left:1669px;top:913.19px;font-size:11px;line-height:14px;color:#f0f0f0;white-space:nowrap;letter-spacing:-0.15px">Extrusion27</div>
<div style="position:absolute;left:1669px;top:933.19px;font-size:11px;line-height:14px;color:#f0f0f0;white-space:nowrap;letter-spacing:-0.15px">Work Plane7</div>
<div style="position:absolute;left:1669px;top:953.19px;font-size:11px;line-height:14px;color:#f0f0f0;white-space:nowrap;letter-spacing:-0.15px">Work Plane8</div>
<div style="position:absolute;left:1669px;top:973.19px;font-size:11px;line-height:14px;color:#f0f0f0;white-space:nowrap;letter-spacing:-0.15px">Sketch17</div>
<div style="position:absolute;left:1669px;top:993.19px;font-size:11px;line-height:14px;color:#f0f0f0;white-space:nowrap;letter-spacing:-0.15px">3D Sketch2</div>
<div style="position:absolute;left:1669px;top:1013.19px;font-size:11px;line-height:14px;color:#f0f0f0;white-space:nowrap;letter-spacing:-0.15px">Revolution1</div>
<div style="position:absolute;left:1669px;top:1033.19px;font-size:11px;line-height:14px;color:#f0f0f0;white-space:nowrap;letter-spacing:-0.15px">Revolution2</div>
<svg style="left:0;top:0;clip-path:inset(168px 18px 25px 1632px)" width="1920" height="1080" viewBox="0 0 1920 1080"><path d="M1641.5 188V1055" stroke="#9aa0aa" stroke-width="1" stroke-dasharray="1 2"/><path d="M1657.5 248V320" stroke="#9aa0aa" stroke-width="1" stroke-dasharray="1 2"/><path d="M1657.5 628V640" stroke="#9aa0aa" stroke-width="1" stroke-dasharray="1 2"/><path d="M1657.5 688V700" stroke="#9aa0aa" stroke-width="1" stroke-dasharray="1 2"/><path d="M1657.5 728V740" stroke="#9aa0aa" stroke-width="1" stroke-dasharray="1 2"/><g transform="translate(1636,172)"><polygon points="0,4 4,0 14,0 14,10 10,14 0,14" fill="#7cc6f6"/><polygon points="10,4 14,0 14,10 10,14" fill="#5aa8e0"/><polygon points="0,4 4,0 14,0 10,4" fill="#b4e0fb"/></g><path d="M1646 199.5H1650" stroke="#9aa0aa" stroke-width="1" stroke-dasharray="1 2"/><path d="M1637 199H1645.5M1641 195V203" stroke="#d8dde4" stroke-width="1.8"/><g transform="translate(1651,192)"><path d="M0 0H6L8 2.5H16V14H0Z" fill="#f6e3a1"/><rect x="0" y="2.5" width="16" height="1" fill="#3b4453" opacity="0.25"/><polygon points="5,7 7,5 12,5 12,10 10,12 5,12" fill="#5aa8e0"/><polygon points="5,7 7,5 12,5 10,7" fill="#7cc6f6"/></g><path d="M1646 219.5H1650" stroke="#9aa0aa" stroke-width="1" stroke-dasharray="1 2"/><path d="M1637 219H1645.5M1641 215V223" stroke="#d8dde4" stroke-width="1.8"/><g transform="translate(1651,212)"><rect x="0" y="0" width="5" height="2.5" fill="#7cc6f6"/><path d="M2.5 4H1.5V13.5H3" stroke="#e8e8e8" fill="none"/><rect x="6" y="4" width="5" height="2.5" fill="#7cc6f6"/><path d="M8 7.5V9.5H9.5" stroke="#e8e8e8" fill="none" stroke-width="0.8"/><rect x="11" y="9" width="5" height="2.5" fill="#7cc6f6"/><rect x="5" y="13" width="5" height="2.5" fill="#7cc6f6"/></g><path d="M1646 239.5H1650" stroke="#9aa0aa" stroke-width="1" stroke-dasharray="1 2"/><path d="M1637 239H1645.5" stroke="#eeeeee" stroke-width="1.8"/><g transform="translate(1651,232)"><path d="M0 0H6L8 2H12V4H3L0.5 12Z" fill="#f6e3a1"/><path d="M3 4H16L13 12H0Z" fill="#f6e3a1"/><path d="M4.5 11V16M15.5 11V16M5 13.5H15" stroke="#e8e8e8" stroke-width="0.9"/></g><path d="M1658 259.5H1666" stroke="#9aa0aa" stroke-width="1" stroke-dasharray="1 2"/><g transform="translate(1667,252)"><path d="M1.5 0V3.5M14.5 0V3.5M1.5 1.5H14.5" stroke="#e8e8e8" stroke-width="0.9"/><polygon points="8,5 15.5,9 8,13 0.5,9" fill="#f4f4f4"/><polygon points="0.5,9 8,13 8,16.5 0.5,12.5" fill="#dcdcdc"/><polygon points="8,13 15.5,9 15.5,12.5 8,16.5" fill="#c2c2c2"/></g><path d="M1658 279.5H1666" stroke="#9aa0aa" stroke-width="1" stroke-dasharray="1 2"/><g transform="translate(1667,272)"><path d="M1.5 0V3.5M14.5 0V3.5M1.5 1.5H14.5" stroke="#e8e8e8" stroke-width="0.9"/><polygon points="8,5 15.5,9 8,13 0.5,9" fill="none" stroke="#e8e8e8" stroke-width="1"/><path d="M0.5 9V12L8 16L15.5 12V9M8 13V16" stroke="#e8e8e8" fill="none" stroke-width="1"/><polygon points="8,7.5 11,9 8,10.5 5,9" fill="none" stroke="#e8e8e8" stroke-width="0.7"/></g><path d="M1658 299.5H1666" stroke="#9aa0aa" stroke-width="1" stroke-dasharray="1 2"/><g transform="translate(1667,292)"><path d="M1.5 0V3.5M14.5 0V3.5M1.5 1.5H14.5" stroke="#e8e8e8" stroke-width="0.9"/><polygon points="8,5 15.5,9 8,13 0.5,9" fill="#f4f4f4"/><polygon points="0.5,9 8,13 8,16.5 0.5,12.5" fill="#dcdcdc"/><polygon points="8,13 15.5,9 15.5,12.5 8,16.5" fill="#c2c2c2"/></g><path d="M1658 319.5H1666" stroke="#9aa0aa" stroke-width="1" stroke-dasharray="1 2"/><g transform="translate(1667,312)"><path d="M1.5 0V3.5M14.5 0V3.5M1.5 1.5H14.5" stroke="#e8e8e8" stroke-width="0.9"/><polygon points="8,5 15.5,9 8,13 0.5,9" fill="#f4f4f4"/><polygon points="0.5,9 8,13 8,16.5 0.5,12.5" fill="#dcdcdc"/><polygon points="8,13 15.5,9 15.5,12.5 8,16.5" fill="#c2c2c2"/></g><path d="M1646 339.5H1650" stroke="#9aa0aa" stroke-width="1" stroke-dasharray="1 2"/><path d="M1637 339H1645.5M1641 335V343" stroke="#d8dde4" stroke-width="1.8"/><g transform="translate(1651,332)"><path d="M0 0H6L8 2.5H16V14H0Z" fill="#f6e3a1"/><rect x="0" y="2.5" width="16" height="1" fill="#3b4453" opacity="0.25"/></g><path d="M1646 359.5H1650" stroke="#9aa0aa" stroke-width="1" stroke-dasharray="1 2"/><g transform="translate(1651,352)"><path d="M1.5 1.5H13.5M1.5 1.5V13.5M1.5 13.5H7" stroke="#e8e8e8" stroke-width="1" stroke-dasharray="3 1.5" fill="none"/><path d="M13.5 1.5V6" stroke="#e8e8e8" stroke-width="1" stroke-dasharray="3 1.5"/><rect x="0.5" y="0.5" width="2" height="2" fill="#e8e8e8"/><rect x="12.5" y="0.5" width="2" height="2" fill="#e8e8e8"/><rect x="0.5" y="12.5" width="2" height="2" fill="#e8e8e8"/><path d="M14 8.5L10 11L14 14" stroke="#b0b0b0" stroke-width="1.3" fill="none"/><circle cx="14" cy="8.5" r="1.8" fill="#b0b0b0"/><circle cx="9.5" cy="11" r="1.8" fill="#b0b0b0"/><circle cx="14" cy="14.5" r="1.8" fill="#b0b0b0"/></g><path d="M1646 379.5H1650" stroke="#9aa0aa" stroke-width="1" stroke-dasharray="1 2"/><path d="M1637 379H1645.5M1641 375V383" stroke="#d8dde4" stroke-width="1.8"/><g transform="translate(1651,372)"><polygon points="0,3 2.5,0.5 12,0.5 12,11 9.5,13.5 0,13.5" fill="#7cc6f6"/><polygon points="9.5,3 12,0.5 12,11 9.5,13.5" fill="#5aa8e0"/><polygon points="0,3 2.5,0.5 12,0.5 9.5,3" fill="#b4e0fb"/><polygon points="0,13 0,15.5 9.5,15.5 12,13 12,11 9.5,13.5 0,13.5" fill="#e0e0e0"/><path d="M14.5 2V13" stroke="#ffffff" stroke-width="1.2"/><path d="M13 4L14.5 1L16 4Z" fill="#ffffff"/></g><path d="M1646 399.5H1650" stroke="#9aa0aa" stroke-width="1" stroke-dasharray="1 2"/><path d="M1637 399H1645.5M1641 395V403" stroke="#d8dde4" stroke-width="1.8"/><g transform="translate(1651,392)"><polygon points="0,3 2.5,0.5 12,0.5 12,11 9.5,13.5 0,13.5" fill="#7cc6f6"/><polygon points="9.5,3 12,0.5 12,11 9.5,13.5" fill="#5aa8e0"/><polygon points="0,3 2.5,0.5 12,0.5 9.5,3" fill="#b4e0fb"/><polygon points="0,13 0,15.5 9.5,15.5 12,13 12,11 9.5,13.5 0,13.5" fill="#e0e0e0"/><path d="M14.5 2V13" stroke="#ffffff" stroke-width="1.2"/><path d="M13 4L14.5 1L16 4Z" fill="#ffffff"/></g><path d="M1646 419.5H1650" stroke="#9aa0aa" stroke-width="1" stroke-dasharray="1 2"/><g transform="translate(1651,412)"><path d="M0 4L3 1H8C12 1 15 4 15 8V14L12 17H0Z" fill="#d8d8d8"/><path d="M12 8V17L15 14V8Z" fill="#bcbcbc"/><path d="M6 1H8C12 1 15 4 15 8L12 9C12 6 10 4 7.5 4Z" fill="#7cc6f6"/><path d="M0 4L3 1H6L4 4Z" fill="#f0f0f0"/></g><path d="M1646 439.5H1650" stroke="#9aa0aa" stroke-width="1" stroke-dasharray="1 2"/><g transform="translate(1651,432)"><path d="M0 4L3 1H8C12 1 15 4 15 8V14L12 17H0Z" fill="#d8d8d8"/><path d="M12 8V17L15 14V8Z" fill="#bcbcbc"/><path d="M6 1H8C12 1 15 4 15 8L12 9C12 6 10 4 7.5 4Z" fill="#7cc6f6"/><path d="M0 4L3 1H6L4 4Z" fill="#f0f0f0"/></g><path d="M1646 459.5H1650" stroke="#9aa0aa" stroke-width="1" stroke-dasharray="1 2"/><g transform="translate(1651,452)"><path d="M3.5 1.5H11M14.5 5V12.5H12" stroke="#e8e8e8" fill="none" stroke-width="1"/><rect x="3.5" y="1.5" width="11" height="11" fill="#8c8e94" opacity="0.9"/><path d="M3.5 1.5H10M3.5 1.5V4.5M14.5 6V12.5H11.5" stroke="#e8e8e8" fill="none" stroke-width="1.1"/><rect x="0.5" y="4.5" width="11" height="11" fill="#6a6e77" stroke="#e8e8e8" stroke-width="1.1"/><rect x="3.5" y="4.5" width="8" height="8" fill="#9a9ca2"/><path d="M3.5 4.5V12.5H11.5" stroke="#e8e8e8" stroke-width="1" fill="none"/><path d="M7 9L11.5 4.5" stroke="#e8e8e8" stroke-width="1.1"/><path d="M10.5 2L13 -0.5L16 2.5L13.5 5Z" fill="#f0f0f0"/><circle cx="7" cy="9" r="1" fill="none" stroke="#ddd" stroke-width="0.7"/></g><path d="M1646 479.5H1650" stroke="#9aa0aa" stroke-width="1" stroke-dasharray="1 2"/><g transform="translate(1651,472)"><path d="M3.5 1.5H11M14.5 5V12.5H12" stroke="#e8e8e8" fill="none" stroke-width="1"/><rect x="3.5" y="1.5" width="11" height="11" fill="#8c8e94" opacity="0.9"/><path d="M3.5 1.5H10M3.5 1.5V4.5M14.5 6V12.5H11.5" stroke="#e8e8e8" fill="none" stroke-width="1.1"/><rect x="0.5" y="4.5" width="11" height="11" fill="#6a6e77" stroke="#e8e8e8" stroke-width="1.1"/><rect x="3.5" y="4.5" width="8" height="8" fill="#9a9ca2"/><path d="M3.5 4.5V12.5H11.5" stroke="#e8e8e8" stroke-width="1" fill="none"/><path d="M7 9L11.5 4.5" stroke="#e8e8e8" stroke-width="1.1"/><path d="M10.5 2L13 -0.5L16 2.5L13.5 5Z" fill="#f0f0f0"/><circle cx="7" cy="9" r="1" fill="none" stroke="#ddd" stroke-width="0.7"/></g><path d="M1646 499.5H1650" stroke="#9aa0aa" stroke-width="1" stroke-dasharray="1 2"/><g transform="translate(1651,492)"><path d="M3.5 1.5H11M14.5 5V12.5H12" stroke="#e8e8e8" fill="none" stroke-width="1"/><rect x="3.5" y="1.5" width="11" height="11" fill="#8c8e94" opacity="0.9"/><path d="M3.5 1.5H10M3.5 1.5V4.5M14.5 6V12.5H11.5" stroke="#e8e8e8" fill="none" stroke-width="1.1"/><rect x="0.5" y="4.5" width="11" height="11" fill="#6a6e77" stroke="#e8e8e8" stroke-width="1.1"/><rect x="3.5" y="4.5" width="8" height="8" fill="#9a9ca2"/><path d="M3.5 4.5V12.5H11.5" stroke="#e8e8e8" stroke-width="1" fill="none"/><path d="M7 9L11.5 4.5" stroke="#e8e8e8" stroke-width="1.1"/><path d="M10.5 2L13 -0.5L16 2.5L13.5 5Z" fill="#f0f0f0"/><circle cx="7" cy="9" r="1" fill="none" stroke="#ddd" stroke-width="0.7"/></g><path d="M1646 519.5H1650" stroke="#9aa0aa" stroke-width="1" stroke-dasharray="1 2"/><g transform="translate(1651,512)"><polygon points="8,3 13,8 8,13 3,8" fill="#6c7079" stroke="#e8e8e8" stroke-width="1.2"/><path d="M0 8H3M13 8H16M8 13V16" stroke="#e8e8e8" stroke-width="1"/><path d="M7.5 8.5L11 5" stroke="#dddddd" stroke-width="1.2"/><path d="M10 3L13 0L16 3L13 6Z" fill="#f2f2f2"/></g><path d="M1646 539.5H1650" stroke="#9aa0aa" stroke-width="1" stroke-dasharray="1 2"/><path d="M1637 539H1645.5M1641 535V543" stroke="#d8dde4" stroke-width="1.8"/><g transform="translate(1651,532)"><rect x="4.5" y="-0.5" width="11.5" height="11.5" fill="#8c8e94" stroke="#e8e8e8" stroke-width="1.1"/><rect x="0.5" y="3.5" width="11.5" height="11.5" fill="#6a6e77" stroke="#e8e8e8" stroke-width="1.1"/><rect x="4.5" y="3.5" width="7.5" height="7.5" fill="#9a9ca2"/><path d="M4.5 3.5V11H12" stroke="#e8e8e8" stroke-width="1" fill="none"/></g><path d="M1646 559.5H1650" stroke="#9aa0aa" stroke-width="1" stroke-dasharray="1 2"/><g transform="translate(1651,552)"><polygon points="0,4 4,0 16,0 16,12 12,16 0,16" fill="#d8d8d8"/><polygon points="12,4 16,0 16,12 12,16" fill="#bdbdbd"/><polygon points="0,4 4,0 16,0 12,4" fill="#f2f2f2"/><rect x="2" y="6" width="8" height="8" fill="#2c313a"/><path d="M3 7H5.5V11H9.5V13H3Z" fill="#7cc6f6"/><path d="M5.5 7H9.5V11H5.5Z" fill="#2c313a"/><polygon points="3,13 5.5,11 9.5,11 9.5,13" fill="#a8dcfb"/></g><path d="M1646 579.5H1650" stroke="#9aa0aa" stroke-width="1" stroke-dasharray="1 2"/><path d="M1637 579H1645.5M1641 575V583" stroke="#d8dde4" stroke-width="1.8"/><g transform="translate(1651,572)"><polygon points="0,3 2.5,0.5 12,0.5 12,11 9.5,13.5 0,13.5" fill="#7cc6f6"/><polygon points="9.5,3 12,0.5 12,11 9.5,13.5" fill="#5aa8e0"/><polygon points="0,3 2.5,0.5 12,0.5 9.5,3" fill="#b4e0fb"/><polygon points="0,13 0,15.5 9.5,15.5 12,13 12,11 9.5,13.5 0,13.5" fill="#e0e0e0"/><path d="M14.5 2V13" stroke="#ffffff" stroke-width="1.2"/><path d="M13 4L14.5 1L16 4Z" fill="#ffffff"/></g><path d="M1646 599.5H1650" stroke="#9aa0aa" stroke-width="1" stroke-dasharray="1 2"/><path d="M1637 599H1645.5M1641 595V603" stroke="#d8dde4" stroke-width="1.8"/><g transform="translate(1651,592)"><polygon points="0,3 2.5,0.5 12,0.5 12,11 9.5,13.5 0,13.5" fill="#7cc6f6"/><polygon points="9.5,3 12,0.5 12,11 9.5,13.5" fill="#5aa8e0"/><polygon points="0,3 2.5,0.5 12,0.5 9.5,3" fill="#b4e0fb"/><polygon points="0,13 0,15.5 9.5,15.5 12,13 12,11 9.5,13.5 0,13.5" fill="#e0e0e0"/><path d="M14.5 2V13" stroke="#ffffff" stroke-width="1.2"/><path d="M13 4L14.5 1L16 4Z" fill="#ffffff"/></g><path d="M1646 619.5H1650" stroke="#9aa0aa" stroke-width="1" stroke-dasharray="1 2"/><path d="M1637 619H1645.5" stroke="#eeeeee" stroke-width="1.8"/><g transform="translate(1651,612)"><polygon points="0,3 2.5,0.5 12,0.5 12,11 9.5,13.5 0,13.5" fill="#7cc6f6"/><polygon points="9.5,3 12,0.5 12,11 9.5,13.5" fill="#5aa8e0"/><polygon points="0,3 2.5,0.5 12,0.5 9.5,3" fill="#b4e0fb"/><polygon points="0,13 0,15.5 9.5,15.5 12,13 12,11 9.5,13.5 0,13.5" fill="#e0e0e0"/><path d="M14.5 2V13" stroke="#ffffff" stroke-width="1.2"/><path d="M13 4L14.5 1L16 4Z" fill="#ffffff"/></g><path d="M1658 639.5H1666" stroke="#9aa0aa" stroke-width="1" stroke-dasharray="1 2"/><g transform="translate(1667,632)"><path d="M1.5 1.5H13.5M1.5 1.5V13.5M1.5 13.5H7" stroke="#e8e8e8" stroke-width="1" stroke-dasharray="3 1.5" fill="none"/><path d="M13.5 1.5V6" stroke="#e8e8e8" stroke-width="1" stroke-dasharray="3 1.5"/><rect x="0.5" y="0.5" width="2" height="2" fill="#e8e8e8"/><rect x="12.5" y="0.5" width="2" height="2" fill="#e8e8e8"/><rect x="0.5" y="12.5" width="2" height="2" fill="#e8e8e8"/><path d="M14 8.5L10 11L14 14" stroke="#b0b0b0" stroke-width="1.3" fill="none"/><circle cx="14" cy="8.5" r="1.8" fill="#b0b0b0"/><circle cx="9.5" cy="11" r="1.8" fill="#b0b0b0"/><circle cx="14" cy="14.5" r="1.8" fill="#b0b0b0"/></g><path d="M1646 659.5H1650" stroke="#9aa0aa" stroke-width="1" stroke-dasharray="1 2"/><g transform="translate(1651,652)"><path d="M1.5 1.5H13.5M1.5 1.5V13.5M1.5 13.5H7" stroke="#e8e8e8" stroke-width="1" stroke-dasharray="3 1.5" fill="none"/><path d="M13.5 1.5V6" stroke="#e8e8e8" stroke-width="1" stroke-dasharray="3 1.5"/><rect x="0.5" y="0.5" width="2" height="2" fill="#e8e8e8"/><rect x="12.5" y="0.5" width="2" height="2" fill="#e8e8e8"/><rect x="0.5" y="12.5" width="2" height="2" fill="#e8e8e8"/><path d="M14 8.5L10 11L14 14" stroke="#b0b0b0" stroke-width="1.3" fill="none"/><circle cx="14" cy="8.5" r="1.8" fill="#b0b0b0"/><circle cx="9.5" cy="11" r="1.8" fill="#b0b0b0"/><circle cx="14" cy="14.5" r="1.8" fill="#b0b0b0"/></g><path d="M1646 679.5H1650" stroke="#9aa0aa" stroke-width="1" stroke-dasharray="1 2"/><path d="M1637 679H1645.5" stroke="#eeeeee" stroke-width="1.8"/><g transform="translate(1651,672)"><polygon points="0,3 2.5,0.5 12,0.5 12,11 9.5,13.5 0,13.5" fill="#7cc6f6"/><polygon points="9.5,3 12,0.5 12,11 9.5,13.5" fill="#5aa8e0"/><polygon points="0,3 2.5,0.5 12,0.5 9.5,3" fill="#b4e0fb"/><polygon points="0,13 0,15.5 9.5,15.5 12,13 12,11 9.5,13.5 0,13.5" fill="#e0e0e0"/><path d="M14.5 2V13" stroke="#ffffff" stroke-width="1.2"/><path d="M13 4L14.5 1L16 4Z" fill="#ffffff"/></g><path d="M1658 699.5H1666" stroke="#9aa0aa" stroke-width="1" stroke-dasharray="1 2"/><g transform="translate(1667,692)"><path d="M1.5 1.5H13.5M1.5 1.5V13.5M1.5 13.5H7" stroke="#e8e8e8" stroke-width="1" stroke-dasharray="3 1.5" fill="none"/><path d="M13.5 1.5V6" stroke="#e8e8e8" stroke-width="1" stroke-dasharray="3 1.5"/><rect x="0.5" y="0.5" width="2" height="2" fill="#e8e8e8"/><rect x="12.5" y="0.5" width="2" height="2" fill="#e8e8e8"/><rect x="0.5" y="12.5" width="2" height="2" fill="#e8e8e8"/><path d="M14 8.5L10 11L14 14" stroke="#b0b0b0" stroke-width="1.3" fill="none"/><circle cx="14" cy="8.5" r="1.8" fill="#b0b0b0"/><circle cx="9.5" cy="11" r="1.8" fill="#b0b0b0"/><circle cx="14" cy="14.5" r="1.8" fill="#b0b0b0"/></g><path d="M1646 719.5H1650" stroke="#9aa0aa" stroke-width="1" stroke-dasharray="1 2"/><path d="M1637 719H1645.5" stroke="#eeeeee" stroke-width="1.8"/><g transform="translate(1651,712)"><polygon points="0,3 2.5,0.5 12,0.5 12,11 9.5,13.5 0,13.5" fill="#7cc6f6"/><polygon points="9.5,3 12,0.5 12,11 9.5,13.5" fill="#5aa8e0"/><polygon points="0,3 2.5,0.5 12,0.5 9.5,3" fill="#b4e0fb"/><polygon points="0,13 0,15.5 9.5,15.5 12,13 12,11 9.5,13.5 0,13.5" fill="#e0e0e0"/><path d="M14.5 2V13" stroke="#ffffff" stroke-width="1.2"/><path d="M13 4L14.5 1L16 4Z" fill="#ffffff"/></g><path d="M1658 739.5H1666" stroke="#9aa0aa" stroke-width="1" stroke-dasharray="1 2"/><g transform="translate(1667,732)"><path d="M1.5 1.5H13.5M1.5 1.5V13.5M1.5 13.5H7" stroke="#e8e8e8" stroke-width="1" stroke-dasharray="3 1.5" fill="none"/><path d="M13.5 1.5V6" stroke="#e8e8e8" stroke-width="1" stroke-dasharray="3 1.5"/><rect x="0.5" y="0.5" width="2" height="2" fill="#e8e8e8"/><rect x="12.5" y="0.5" width="2" height="2" fill="#e8e8e8"/><rect x="0.5" y="12.5" width="2" height="2" fill="#e8e8e8"/><path d="M14 8.5L10 11L14 14" stroke="#b0b0b0" stroke-width="1.3" fill="none"/><circle cx="14" cy="8.5" r="1.8" fill="#b0b0b0"/><circle cx="9.5" cy="11" r="1.8" fill="#b0b0b0"/><circle cx="14" cy="14.5" r="1.8" fill="#b0b0b0"/></g><path d="M1646 759.5H1650" stroke="#9aa0aa" stroke-width="1" stroke-dasharray="1 2"/><g transform="translate(1651,752)"><path d="M1.5 1.5H13.5M1.5 1.5V13.5M1.5 13.5H7" stroke="#e8e8e8" stroke-width="1" stroke-dasharray="3 1.5" fill="none"/><path d="M13.5 1.5V6" stroke="#e8e8e8" stroke-width="1" stroke-dasharray="3 1.5"/><rect x="0.5" y="0.5" width="2" height="2" fill="#e8e8e8"/><rect x="12.5" y="0.5" width="2" height="2" fill="#e8e8e8"/><rect x="0.5" y="12.5" width="2" height="2" fill="#e8e8e8"/><path d="M14 8.5L10 11L14 14" stroke="#b0b0b0" stroke-width="1.3" fill="none"/><circle cx="14" cy="8.5" r="1.8" fill="#b0b0b0"/><circle cx="9.5" cy="11" r="1.8" fill="#b0b0b0"/><circle cx="14" cy="14.5" r="1.8" fill="#b0b0b0"/></g><path d="M1646 779.5H1650" stroke="#9aa0aa" stroke-width="1" stroke-dasharray="1 2"/><path d="M1637 779H1645.5M1641 775V783" stroke="#d8dde4" stroke-width="1.8"/><g transform="translate(1651,772)"><polygon points="0,3 2.5,0.5 12,0.5 12,11 9.5,13.5 0,13.5" fill="#7cc6f6"/><polygon points="9.5,3 12,0.5 12,11 9.5,13.5" fill="#5aa8e0"/><polygon points="0,3 2.5,0.5 12,0.5 9.5,3" fill="#b4e0fb"/><polygon points="0,13 0,15.5 9.5,15.5 12,13 12,11 9.5,13.5 0,13.5" fill="#e0e0e0"/><path d="M14.5 2V13" stroke="#ffffff" stroke-width="1.2"/><path d="M13 4L14.5 1L16 4Z" fill="#ffffff"/></g><path d="M1646 799.5H1650" stroke="#9aa0aa" stroke-width="1" stroke-dasharray="1 2"/><path d="M1637 799H1645.5M1641 795V803" stroke="#d8dde4" stroke-width="1.8"/><g transform="translate(1651,792)"><polygon points="0,3 2.5,0.5 12,0.5 12,11 9.5,13.5 0,13.5" fill="#7cc6f6"/><polygon points="9.5,3 12,0.5 12,11 9.5,13.5" fill="#5aa8e0"/><polygon points="0,3 2.5,0.5 12,0.5 9.5,3" fill="#b4e0fb"/><polygon points="0,13 0,15.5 9.5,15.5 12,13 12,11 9.5,13.5 0,13.5" fill="#e0e0e0"/><path d="M14.5 2V13" stroke="#ffffff" stroke-width="1.2"/><path d="M13 4L14.5 1L16 4Z" fill="#ffffff"/></g><path d="M1646 819.5H1650" stroke="#9aa0aa" stroke-width="1" stroke-dasharray="1 2"/><path d="M1637 819H1645.5M1641 815V823" stroke="#d8dde4" stroke-width="1.8"/><g transform="translate(1651,812)"><polygon points="7,0.5 7,14 0,14" fill="#e4e4e4"/><polygon points="8.5,0.5 8.5,14 15.5,14" fill="#7cc6f6"/></g><path d="M1646 839.5H1650" stroke="#9aa0aa" stroke-width="1" stroke-dasharray="1 2"/><path d="M1637 839H1645.5M1641 835V843" stroke="#d8dde4" stroke-width="1.8"/><g transform="translate(1651,832)"><rect x="4.5" y="-0.5" width="11.5" height="11.5" fill="#8c8e94" stroke="#e8e8e8" stroke-width="1.1"/><rect x="0.5" y="3.5" width="11.5" height="11.5" fill="#6a6e77" stroke="#e8e8e8" stroke-width="1.1"/><rect x="4.5" y="3.5" width="7.5" height="7.5" fill="#9a9ca2"/><path d="M4.5 3.5V11H12" stroke="#e8e8e8" stroke-width="1" fill="none"/></g><path d="M1646 859.5H1650" stroke="#9aa0aa" stroke-width="1" stroke-dasharray="1 2"/><path d="M1637 859H1645.5M1641 855V863" stroke="#d8dde4" stroke-width="1.8"/><g transform="translate(1651,852)"><polygon points="7,0.5 7,14 0,14" fill="#e4e4e4"/><polygon points="8.5,0.5 8.5,14 15.5,14" fill="#7cc6f6"/></g><path d="M1646 879.5H1650" stroke="#9aa0aa" stroke-width="1" stroke-dasharray="1 2"/><path d="M1637 879H1645.5M1641 875V883" stroke="#d8dde4" stroke-width="1.8"/><g transform="translate(1651,872)"><polygon points="0,3 2.5,0.5 12,0.5 12,11 9.5,13.5 0,13.5" fill="#7cc6f6"/><polygon points="9.5,3 12,0.5 12,11 9.5,13.5" fill="#5aa8e0"/><polygon points="0,3 2.5,0.5 12,0.5 9.5,3" fill="#b4e0fb"/><polygon points="0,13 0,15.5 9.5,15.5 12,13 12,11 9.5,13.5 0,13.5" fill="#e0e0e0"/><path d="M14.5 2V13" stroke="#ffffff" stroke-width="1.2"/><path d="M13 4L14.5 1L16 4Z" fill="#ffffff"/></g><path d="M1646 899.5H1650" stroke="#9aa0aa" stroke-width="1" stroke-dasharray="1 2"/><path d="M1637 899H1645.5M1641 895V903" stroke="#d8dde4" stroke-width="1.8"/><g transform="translate(1651,892)"><polygon points="0,3 2.5,0.5 12,0.5 12,11 9.5,13.5 0,13.5" fill="#7cc6f6"/><polygon points="9.5,3 12,0.5 12,11 9.5,13.5" fill="#5aa8e0"/><polygon points="0,3 2.5,0.5 12,0.5 9.5,3" fill="#b4e0fb"/><polygon points="0,13 0,15.5 9.5,15.5 12,13 12,11 9.5,13.5 0,13.5" fill="#e0e0e0"/><path d="M14.5 2V13" stroke="#ffffff" stroke-width="1.2"/><path d="M13 4L14.5 1L16 4Z" fill="#ffffff"/></g><path d="M1646 919.5H1650" stroke="#9aa0aa" stroke-width="1" stroke-dasharray="1 2"/><path d="M1637 919H1645.5M1641 915V923" stroke="#d8dde4" stroke-width="1.8"/><g transform="translate(1651,912)"><polygon points="0,3 2.5,0.5 12,0.5 12,11 9.5,13.5 0,13.5" fill="#7cc6f6"/><polygon points="9.5,3 12,0.5 12,11 9.5,13.5" fill="#5aa8e0"/><polygon points="0,3 2.5,0.5 12,0.5 9.5,3" fill="#b4e0fb"/><polygon points="0,13 0,15.5 9.5,15.5 12,13 12,11 9.5,13.5 0,13.5" fill="#e0e0e0"/><path d="M14.5 2V13" stroke="#ffffff" stroke-width="1.2"/><path d="M13 4L14.5 1L16 4Z" fill="#ffffff"/></g><path d="M1646 939.5H1650" stroke="#9aa0aa" stroke-width="1" stroke-dasharray="1 2"/><path d="M1637 939H1645.5M1641 935V943" stroke="#d8dde4" stroke-width="1.8"/><g transform="translate(1651,932)"><rect x="4.5" y="-0.5" width="11.5" height="11.5" fill="#8c8e94" stroke="#e8e8e8" stroke-width="1.1"/><rect x="0.5" y="3.5" width="11.5" height="11.5" fill="#6a6e77" stroke="#e8e8e8" stroke-width="1.1"/><rect x="4.5" y="3.5" width="7.5" height="7.5" fill="#9a9ca2"/><path d="M4.5 3.5V11H12" stroke="#e8e8e8" stroke-width="1" fill="none"/></g><path d="M1646 959.5H1650" stroke="#9aa0aa" stroke-width="1" stroke-dasharray="1 2"/><path d="M1637 959H1645.5M1641 955V963" stroke="#d8dde4" stroke-width="1.8"/><g transform="translate(1651,952)"><rect x="4.5" y="-0.5" width="11.5" height="11.5" fill="#8c8e94" stroke="#e8e8e8" stroke-width="1.1"/><rect x="0.5" y="3.5" width="11.5" height="11.5" fill="#6a6e77" stroke="#e8e8e8" stroke-width="1.1"/><rect x="4.5" y="3.5" width="7.5" height="7.5" fill="#9a9ca2"/><path d="M4.5 3.5V11H12" stroke="#e8e8e8" stroke-width="1" fill="none"/></g><path d="M1646 979.5H1650" stroke="#9aa0aa" stroke-width="1" stroke-dasharray="1 2"/><g transform="translate(1651,972)"><path d="M1.5 1.5H13.5M1.5 1.5V13.5M1.5 13.5H7" stroke="#e8e8e8" stroke-width="1" stroke-dasharray="3 1.5" fill="none"/><path d="M13.5 1.5V6" stroke="#e8e8e8" stroke-width="1" stroke-dasharray="3 1.5"/><rect x="0.5" y="0.5" width="2" height="2" fill="#e8e8e8"/><rect x="12.5" y="0.5" width="2" height="2" fill="#e8e8e8"/><rect x="0.5" y="12.5" width="2" height="2" fill="#e8e8e8"/><path d="M14 8.5L10 11L14 14" stroke="#b0b0b0" stroke-width="1.3" fill="none"/><circle cx="14" cy="8.5" r="1.8" fill="#b0b0b0"/><circle cx="9.5" cy="11" r="1.8" fill="#b0b0b0"/><circle cx="14" cy="14.5" r="1.8" fill="#b0b0b0"/></g><path d="M1646 999.5H1650" stroke="#9aa0aa" stroke-width="1" stroke-dasharray="1 2"/><g transform="translate(1651,992)"><path d="M8 0V15M0 15H9M8 15L4 17" stroke="#e8e8e8" stroke-width="0.9" fill="none"/><path d="M10.5 13L13 10" stroke="#e8e8e8" stroke-width="1"/><rect x="6.5" y="13.5" width="2" height="2" fill="#e8e8e8"/></g><path d="M1646 1019.5H1650" stroke="#9aa0aa" stroke-width="1" stroke-dasharray="1 2"/><path d="M1637 1019H1645.5M1641 1015V1023" stroke="#d8dde4" stroke-width="1.8"/><g transform="translate(1651,1012)"><path d="M0 13 L0 5.5 Q8 1.5 16 5.5 V13 L13 15.5 Q8 12.5 3 15 Z" fill="#7cc6f6"/><path d="M0 5.5 Q8 1.5 16 5.5 L13 8.5 Q8 5.5 3 8.5 Z" fill="#b8e0fc"/><path d="M13 8.5 L16 5.5 V13 L13 15.5 Z" fill="#f0f0f0"/><path d="M2 3.5 Q8 0 15 2.5" stroke="#f0f0f0" stroke-width="1.4" fill="none"/><path d="M0 4.5 L3.5 1.5 L3.5 5.5 Z" fill="#f0f0f0"/></g><path d="M1646 1039.5H1650" stroke="#9aa0aa" stroke-width="1" stroke-dasharray="1 2"/><path d="M1637 1039H1645.5M1641 1035V1043" stroke="#d8dde4" stroke-width="1.8"/><g transform="translate(1651,1032)"><path d="M0 13 L0 5.5 Q8 1.5 16 5.5 V13 L13 15.5 Q8 12.5 3 15 Z" fill="#7cc6f6"/><path d="M0 5.5 Q8 1.5 16 5.5 L13 8.5 Q8 5.5 3 8.5 Z" fill="#b8e0fc"/><path d="M13 8.5 L16 5.5 V13 L13 15.5 Z" fill="#f0f0f0"/><path d="M2 3.5 Q8 0 15 2.5" stroke="#f0f0f0" stroke-width="1.4" fill="none"/><path d="M0 4.5 L3.5 1.5 L3.5 5.5 Z" fill="#f0f0f0"/></g><path d="M1646 1059.5H1650" stroke="#9aa0aa" stroke-width="1" stroke-dasharray="1 2"/><g transform="translate(1651,1052)"><polygon points="0,3 2.5,0.5 12,0.5 12,11 9.5,13.5 0,13.5" fill="#7cc6f6"/><polygon points="9.5,3 12,0.5 12,11 9.5,13.5" fill="#5aa8e0"/><polygon points="0,3 2.5,0.5 12,0.5 9.5,3" fill="#b4e0fb"/><polygon points="0,13 0,15.5 9.5,15.5 12,13 12,11 9.5,13.5 0,13.5" fill="#e0e0e0"/><path d="M14.5 2V13" stroke="#ffffff" stroke-width="1.2"/><path d="M13 4L14.5 1L16 4Z" fill="#ffffff"/></g></svg>
<svg style="left:0;top:0;clip-path:inset(144px 292px 49px 268px)" width="1920" height="1080" viewBox="0 0 1920 1080"><defs>
<linearGradient id="gUp" x1="0" y1="0" x2="0" y2="1">
 <stop offset="0" stop-color="#6c6c73"/><stop offset="0.14" stop-color="#56565c"/><stop offset="0.26" stop-color="#444449"/><stop offset="0.33" stop-color="#46464a"/><stop offset="0.42" stop-color="#525257"/><stop offset="0.55" stop-color="#5a5a5f"/><stop offset="1" stop-color="#5c5c61"/></linearGradient>
<linearGradient id="gLow" x1="0" y1="0" x2="0" y2="1">
 <stop offset="0" stop-color="#6a6a70"/><stop offset="0.2" stop-color="#5c5c62"/><stop offset="0.45" stop-color="#454549"/><stop offset="0.55" stop-color="#434347"/><stop offset="0.85" stop-color="#56565b"/><stop offset="1" stop-color="#5c5c62"/></linearGradient>
<linearGradient id="gBand" x1="0" y1="0" x2="0" y2="1">
 <stop offset="0" stop-color="#58585e"/><stop offset="1" stop-color="#6a6a73"/></linearGradient>
<linearGradient id="gShaft" x1="0" y1="0" x2="0" y2="1">
 <stop offset="0" stop-color="#88888d"/><stop offset="0.2" stop-color="#9d9da1"/><stop offset="0.5" stop-color="#88888c"/><stop offset="0.85" stop-color="#434347"/><stop offset="1" stop-color="#56565b"/></linearGradient>
<linearGradient id="gFlankL" x1="0" y1="0" x2="1" y2="0">
 <stop offset="0" stop-color="#555559"/><stop offset="0.15" stop-color="#5a5a5e"/><stop offset="0.5" stop-color="#7e7e82"/><stop offset="1" stop-color="#9c9ca0"/></linearGradient>
<linearGradient id="gFlankR" x1="0" y1="0" x2="1" y2="0">
 <stop offset="0" stop-color="#98989c"/><stop offset="0.6" stop-color="#a0a0a4"/><stop offset="0.88" stop-color="#8a8a8e"/><stop offset="1" stop-color="#5e5e62"/></linearGradient>
<linearGradient id="gB3" x1="0" y1="0" x2="0" y2="1">
 <stop offset="0" stop-color="#7e7e82"/><stop offset="1" stop-color="#5a5a5e"/></linearGradient>
<linearGradient id="gB5" x1="0" y1="0" x2="0" y2="1">
 <stop offset="0" stop-color="#626266"/><stop offset="0.7" stop-color="#404044"/><stop offset="1" stop-color="#4c4c50"/></linearGradient>
<linearGradient id="gStripL" x1="0" y1="0" x2="1" y2="0">
 <stop offset="0" stop-color="#7a7a7e"/><stop offset="0.5" stop-color="#a4a4a8"/><stop offset="1" stop-color="#8e8e92"/></linearGradient>
<linearGradient id="gStripR" x1="0" y1="0" x2="1" y2="0">
 <stop offset="0" stop-color="#a4a4a8"/><stop offset="1" stop-color="#68686c"/></linearGradient>
<linearGradient id="gCube" x1="0" y1="0" x2="0" y2="1">
 <stop offset="0" stop-color="#f2f2f2"/><stop offset="1" stop-color="#e2e2e2"/></linearGradient>
<radialGradient id="gShadow" cx="0.5" cy="0.5" r="0.5">
 <stop offset="0" stop-color="#000" stop-opacity="0.28"/><stop offset="1" stop-color="#000" stop-opacity="0"/></radialGradient>
<radialGradient id="gBall" cx="0.4" cy="0.35" r="0.7">
 <stop offset="0" stop-color="#d01010"/><stop offset="1" stop-color="#6a0000"/></radialGradient>
</defs><rect x="575.5" y="701.5" width="96" height="35" fill="url(#gShaft)" stroke="#3a3a3e" stroke-width="1"/><rect x="575.5" y="714.5" width="48" height="9" fill="#7b7a7f" stroke="#3a3a3e" stroke-width="1"/><rect x="1224.5" y="701.5" width="96" height="35" fill="url(#gShaft)" stroke="#3a3a3e" stroke-width="1"/><rect x="1272.5" y="714.5" width="48" height="9" fill="#7b7a7f" stroke="#3a3a3e" stroke-width="1"/><rect x="707.5" y="314.5" width="481" height="480" fill="url(#gUp)" stroke="#4a4a4e" stroke-width="1"/><rect x="709" y="316" width="478" height="1" fill="#8a8a90"/><path d="M709.5 508 C716 536 735 566 778.5 579 L778.5 640 L709.5 616 Z" fill="url(#gFlankL)"/><path d="M1186.5 508 C1180 536 1161 566 1117.5 579 L1117.5 640 L1186.5 616 Z" fill="url(#gFlankR)"/><path d="M709.5 508 C716 536 735 566 778.5 579" stroke="#3c3c40" fill="none" stroke-width="1"/><path d="M1186.5 508 C1180 536 1161 566 1117.5 579" stroke="#3c3c40" fill="none" stroke-width="1"/><polygon points="778.5,573 792.5,550 792.5,650 778.5,650" fill="#8a8a8e"/><polygon points="792.5,550 802,523 802,650 792.5,650" fill="#7c7c80"/><polygon points="802,523 811,482 811,650 802,650" fill="#707074"/><polygon points="811,482 819,476 819,660 811,660" fill="url(#gStripL)"/><path d="M778.5 573L792.5 550L802 523L811 482L819 476" stroke="#3c3c40" fill="none" stroke-width="1"/><path d="M778.5 573V660" stroke="#3c3c40" stroke-width="1"/><path d="M792.5 550V660" stroke="#3c3c40" stroke-width="1"/><path d="M802 523V660" stroke="#3c3c40" stroke-width="1"/><path d="M811 482V660" stroke="#3c3c40" stroke-width="1"/><path d="M819 476V660" stroke="#3c3c40" stroke-width="1"/><polygon points="1077,476 1085,482 1085,660 1077,660" fill="url(#gStripR)"/><polygon points="1085,482 1094,523 1094,650 1085,650" fill="#5c5c60"/><polygon points="1094,523 1103.5,550 1103.5,650 1094,650" fill="#58585c"/><polygon points="1103.5,550 1117.5,573 1117.5,650 1103.5,650" fill="#56565a"/><path d="M1117.5 573L1103.5 550L1094 523L1085 482L1077 476" stroke="#3c3c40" fill="none" stroke-width="1"/><path d="M1077 476V660" stroke="#3c3c40" stroke-width="1"/><path d="M1085 482V660" stroke="#3c3c40" stroke-width="1"/><path d="M1094 523V660" stroke="#3c3c40" stroke-width="1"/><path d="M1103.5 550V660" stroke="#3c3c40" stroke-width="1"/><path d="M1117.5 573V660" stroke="#3c3c40" stroke-width="1"/><rect x="819.5" y="476" width="257" height="10" fill="#a2a2a6"/><rect x="819.5" y="486" width="257" height="30" fill="#959599"/><rect x="819.5" y="516" width="257" height="32" fill="#858589"/><rect x="819.5" y="548" width="257" height="21" fill="url(#gB3)"/><rect x="819.5" y="569" width="257" height="31" fill="#6b6b6f"/><rect x="819.5" y="600" width="257" height="36" fill="url(#gB5)"/><rect x="819.5" y="636" width="257" height="27" fill="#4a4a4e"/><rect x="819.5" y="663" width="257" height="27" fill="#47474b"/><rect x="819.5" y="485.5" width="257" height="1" fill="#3a3a3e"/><rect x="819.5" y="515" width="257" height="1" fill="#3a3a3e"/><rect x="819.5" y="517" width="257" height="1" fill="#3a3a3e"/><rect x="819.5" y="548" width="257" height="1" fill="#3a3a3e"/><rect x="819.5" y="569.5" width="257" height="1" fill="#3a3a3e"/><rect x="819.5" y="600" width="257" height="1" fill="#3a3a3e"/><rect x="819.5" y="636" width="257" height="1" fill="#8e8e92"/><rect x="819.5" y="637" width="257" height="1" fill="#3a3a3e"/><rect x="819.5" y="662.5" width="257" height="1" fill="#3a3a3e"/><rect x="819" y="476" width="258" height="1" fill="#3a3a3e"/><rect x="944.5" y="476" width="7" height="210" fill="#8a8a8e"/><rect x="944.5" y="476" width="1" height="210" fill="#3a3a3e"/><rect x="947.5" y="476" width="1" height="210" fill="#5a5a5e"/><rect x="950.5" y="476" width="1" height="210" fill="#3a3a3e"/><path d="M709.5 615.5 L948 682 L1186.5 615.5 V793.5 H709.5 Z" fill="#7f7e83" stroke="#3c3c40" stroke-width="1"/><rect x="707.5" y="794.5" width="481" height="199" fill="url(#gLow)" stroke="#4a4a4e" stroke-width="1"/><rect x="708" y="963.5" width="480" height="30" fill="url(#gBand)"/><path d="M708 963.5H1188" stroke="#3e3e42" stroke-width="1"/><path d="M707.5 993.5H1188.5" stroke="#3e3e42" stroke-width="1"/><rect x="671.5" y="309.5" width="36" height="687" fill="#7b7a7f" stroke="#3a3a3e" stroke-width="1"/><path d="M682.0 481.5 Q682.0 478.5 685.0 476.5 H694.0 Q697.0 478.5 697.0 481.5 V492.5 Q697.0 495.5 694.0 497.5 H685.0 Q682.0 495.5 682.0 492.5 Z" fill="none" stroke="#3a3a3e" stroke-width="1"/><path d="M682.0 814.5 Q682.0 811.5 685.0 809.5 H694.0 Q697.0 811.5 697.0 814.5 V825.5 Q697.0 828.5 694.0 830.5 H685.0 Q682.0 828.5 682.0 825.5 Z" fill="none" stroke="#3a3a3e" stroke-width="1"/><rect x="1188.5" y="309.5" width="36" height="687" fill="#7b7a7f" stroke="#3a3a3e" stroke-width="1"/><path d="M1199.0 481.5 Q1199.0 478.5 1202.0 476.5 H1211.0 Q1214.0 478.5 1214.0 481.5 V492.5 Q1214.0 495.5 1211.0 497.5 H1202.0 Q1199.0 495.5 1199.0 492.5 Z" fill="none" stroke="#3a3a3e" stroke-width="1"/><path d="M1199.0 814.5 Q1199.0 811.5 1202.0 809.5 H1211.0 Q1214.0 811.5 1214.0 814.5 V825.5 Q1214.0 828.5 1211.0 830.5 H1202.0 Q1199.0 828.5 1199.0 825.5 Z" fill="none" stroke="#3a3a3e" stroke-width="1"/><rect x="668" y="753" width="3" height="3" fill="#444"/><rect x="1225" y="753" width="3" height="3" fill="#444"/><path d="M707.5 178V299M1188.5 178V299" stroke="#000080" stroke-width="1.2"/><path d="M708 208.5H907M989 208.5H1188" stroke="#000080" stroke-width="1.3"/><path d="M710 207H715V206H720V205H725V204H730V203H732V214H730V213H725V212H720V211H715V210H710Z" fill="#000080"/><path d="M1186 207H1181V206H1176V205H1171V204H1166V203H1164V214H1166V213H1171V212H1176V211H1181V210H1186Z" fill="#000080"/><text x="948" y="224" font-family="Liberation Sans" font-size="43.5" fill="#000080" text-anchor="middle" textLength="68" lengthAdjust="spacingAndGlyphs">404</text><path d="M598 314.5H692M598 795.5H692" stroke="#000080" stroke-width="1.2"/><path d="M628.5 314V514M628.5 596V795" stroke="#000080" stroke-width="1.3"/><path d="M627 316V321H626V326H625V331H624V336H623V338H634V336H633V331H632V326H631V321H630V316Z" fill="#000080"/><path d="M627 793V788H626V783H625V778H624V773H623V771H634V773H633V778H632V783H631V788H630V793Z" fill="#000080"/><text transform="translate(644.5,555.5) rotate(-90)" font-family="Liberation Sans" font-size="43.5" fill="#000080" text-anchor="middle" textLength="68" lengthAdjust="spacingAndGlyphs">404</text><circle cx="320.2" cy="978.3" r="6" fill="url(#gBall)"/><path d="M320.5 959V978" stroke="#00b000" stroke-width="1.2"/><path d="M320.5 949L315 957.5H326Z" fill="#008800"/><path d="M320 978.4H341" stroke="#0000c0" stroke-width="1.2"/><path d="M350.5 978.4L340.2 973V984Z" fill="#000090"/><text x="320.5" y="947" font-family="Liberation Sans" font-size="11" fill="#22ee22" text-anchor="middle">Y</text><text x="356.5" y="983.5" font-family="Liberation Sans" font-size="11" fill="#3030ff" text-anchor="middle">Z</text><ellipse cx="1566" cy="260" rx="44" ry="5" fill="url(#gShadow)"/><rect x="1539.5" y="203.5" width="53" height="53" fill="url(#gCube)" stroke="#8c8c8c" stroke-width="1"/><rect x="1549" y="213" width="34" height="34" fill="#dfe0e3"/><text x="1566" y="235.5" font-family="Liberation Sans" font-weight="bold" font-size="14.5" fill="#8e9198" text-anchor="middle" textLength="25.5" lengthAdjust="spacingAndGlyphs">LEFT</text><rect x="1594.5" y="150.5" width="11" height="10" fill="none" stroke="#3c3c3c" stroke-width="1.2"/><rect x="1594" y="150" width="12" height="2" fill="#3c3c3c"/><path d="M1600 151V161M1600 155.5H1606" stroke="#3c3c3c" stroke-width="1.2"/><path d="M1615.5 151L1625 160.5M1625 151L1615.5 160.5" stroke="#444" stroke-width="1.3"/><rect x="1593.5" y="289.5" width="33" height="320" rx="4" fill="#f3f3f3" stroke="#b8b8b8" stroke-width="1.5"/><circle cx="1618.8" cy="295.8" r="3.3" fill="#c8c8c8"/><path d="M1617.3 294.3L1620.3 297.3M1620.3 294.3L1617.3 297.3" stroke="#f3f3f3" stroke-width="0.9"/><path d="M1599.5 322C1599.5 315 1604 311.5 1610 311.5H1620V322C1620 328 1615.5 332 1610 332S1599.5 328 1599.5 322Z" fill="#ececec" stroke="#9a9a9a" stroke-width="1"/><circle cx="1610" cy="321" r="5.5" fill="#e4e4e4" stroke="#9a9a9a" stroke-width="1"/><path d="M1603 327L1606 325M1617 327L1614 325" stroke="#9a9a9a"/><path d="M1606.5 342.5H1612.5L1609.5 345.5Z" fill="#8a8a8a"/><path d="M1606.5 421.5H1612.5L1609.5 424.5Z" fill="#8a8a8a"/><path d="M1606.5 462.5H1612.5L1609.5 465.5Z" fill="#8a8a8a"/><path d="M1606.5 553H1612.5L1609.5 556Z" fill="#8a8a8a"/><path d="M1606.5 589.5H1612.5L1609.5 592.5Z" fill="#8a8a8a"/><path d="M1597 350.5H1622" stroke="#c4c4c4" stroke-width="1"/><path d="M1602 371C1600 368 1598 366 1599 365C1600 364 1602 366 1604 368V360C1604 358 1606 358 1606 360V366V358C1606 356 1608.5 356 1608.5 358V366V358.5C1608.5 356.5 1611 356.5 1611 358.5V366V360.5C1611 358.5 1613.5 358.5 1613.5 360.5V372C1613.5 377 1611 380 1607 380C1604 380 1603 378 1602 371Z" fill="#efefef" stroke="#9a9a9a" stroke-width="1"/><path d="M1601 389.5V399M1597 394.5H1606M1598 402.5H1609" stroke="#9a9a9a" stroke-width="2"/><circle cx="1612.5" cy="402" r="4.5" fill="#eef3f6" stroke="#9a9a9a" stroke-width="1.3"/><path d="M1616 405.5L1620 409.5" stroke="#9a9a9a" stroke-width="2"/><ellipse cx="1609.5" cy="443" rx="11" ry="4" fill="none" stroke="#9a9a9a" stroke-width="1"/><ellipse cx="1609.5" cy="442" rx="4" ry="11" fill="none" stroke="#9a9a9a" stroke-width="1"/><path d="M1606 442H1613M1609.5 438.5V445.5" stroke="#9a9a9a"/><path d="M1598.5 479V497H1620.5V485H1602" stroke="#9a9a9a" fill="none" stroke-width="1.2"/><rect x="1601" y="486" width="17" height="8" fill="#dedede" stroke="#9a9a9a"/><path d="M1599 479L1611 475V482" stroke="#9a9a9a" fill="none"/><path d="M1602 505H1605M1614 505H1617M1602 505V508M1617 505V508M1602 515V518H1605M1617 515V518H1614" stroke="#9a9a9a" stroke-width="1.2" fill="none"/><path d="M1606 511.5H1614M1606 511.5L1608.5 509M1606 511.5L1608.5 514" stroke="#9a9a9a" fill="none"/><path d="M1602.5 534.5L1606 531H1617.5V542L1614 545.5H1602.5Z" fill="#f3f3f3" stroke="#9a9a9a"/><path d="M1602.5 534.5H1614V545.5M1614 534.5L1617.5 531" stroke="#9a9a9a" fill="none"/><circle cx="1607.5" cy="568" r="5.5" fill="#8ab8e8"/><circle cx="1606" cy="566.5" r="2.5" fill="#cfe5fa"/><path d="M1608 574V579H1617L1620 576V568H1613" stroke="#9a9a9a" fill="#f3f3f3"/><circle cx="1619" cy="602.5" r="3.3" fill="#c8c8c8"/><path d="M1617.3 602.5H1620.7" stroke="#f3f3f3" stroke-width="1"/></svg>
<div style="position:absolute;left:268px;top:1031px;width:150px;height:24px;background:#3b4453;"></div>
<div style="position:absolute;left:268px;top:1052px;width:150px;height:3px;background:#3aa7de;"></div>
<div style="position:absolute;left:276px;top:1034.34px;font-size:12px;line-height:15px;color:#f2f2f2;white-space:nowrap;letter-spacing:-0.3px">BLOWER - NICOT...ipt</div>
<svg style="left:397px;top:1035px;" width="9" height="9" viewBox="0 0 9 9"><path d="M0.5 0.5L8.5 8.5M8.5 0.5L0.5 8.5" stroke="#b8bcc4" stroke-width="1.3"/></svg>
<svg style="left:1609px;top:1036px;" width="14" height="13" viewBox="0 0 14 13"><rect x="0" y="0" width="14" height="2" fill="#a8a8a8"/><rect x="0" y="5.5" width="14" height="2" fill="#a8a8a8"/><rect x="0" y="11" width="14" height="2" fill="#a8a8a8"/></svg>
<div style="position:absolute;left:1841px;top:1058px;width:1px;height:20px;background:#d8d8d8;"></div>
<div style="position:absolute;left:1881px;top:1058px;width:1px;height:20px;background:#d8d8d8;"></div>
<div style="position:absolute;left:1919px;top:1058px;width:1px;height:20px;background:#d8d8d8;"></div>
<div style="position:absolute;left:1851px;top:1061.34px;font-size:12px;line-height:15px;color:#e8e8e8;white-space:nowrap;">1</div>
<div style="position:absolute;left:1889px;top:1061.34px;font-size:12px;line-height:15px;color:#e8e8e8;white-space:nowrap;">1</div>
</body></html>
